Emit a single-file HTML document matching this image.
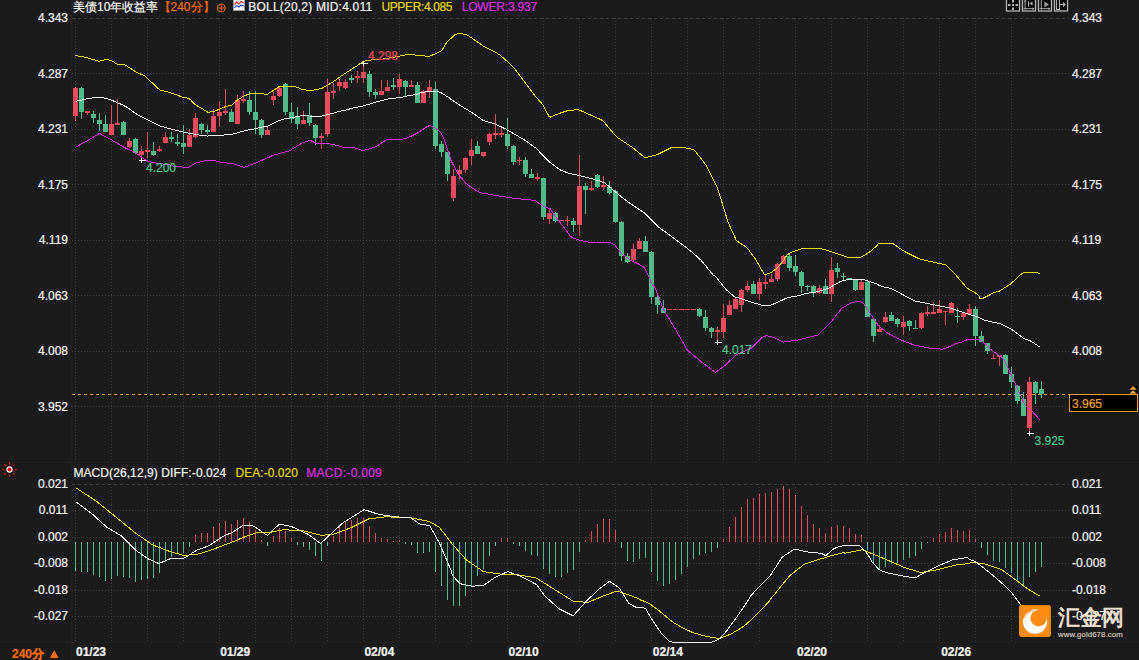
<!DOCTYPE html>
<html><head><meta charset="utf-8"><style>
html,body{margin:0;padding:0;background:#1b1b1b;width:1139px;height:660px;overflow:hidden;position:relative;font-family:"Liberation Sans",sans-serif}
.t{position:absolute;white-space:nowrap;line-height:1;font-family:"Liberation Sans",sans-serif;-webkit-text-stroke:0.2px currentColor}
</style></head><body>
<svg width="1139" height="660" viewBox="0 0 1139 660" style="position:absolute;left:0;top:0"><g stroke="#3c3c3c" stroke-width="1" stroke-dasharray="1,2" shape-rendering="crispEdges"><line x1="75.5" y1="18" x2="75.5" y2="461" /><line x1="75.5" y1="487" x2="75.5" y2="641" /><line x1="111.5" y1="18" x2="111.5" y2="461" /><line x1="111.5" y1="487" x2="111.5" y2="641" /><line x1="147.5" y1="18" x2="147.5" y2="461" /><line x1="147.5" y1="487" x2="147.5" y2="641" /><line x1="183.5" y1="18" x2="183.5" y2="461" /><line x1="183.5" y1="487" x2="183.5" y2="641" /><line x1="219.5" y1="18" x2="219.5" y2="461" /><line x1="219.5" y1="487" x2="219.5" y2="641" /><line x1="255.5" y1="18" x2="255.5" y2="461" /><line x1="255.5" y1="487" x2="255.5" y2="641" /><line x1="291.5" y1="18" x2="291.5" y2="461" /><line x1="291.5" y1="487" x2="291.5" y2="641" /><line x1="327.5" y1="18" x2="327.5" y2="461" /><line x1="327.5" y1="487" x2="327.5" y2="641" /><line x1="363.5" y1="18" x2="363.5" y2="461" /><line x1="363.5" y1="487" x2="363.5" y2="641" /><line x1="399.5" y1="18" x2="399.5" y2="461" /><line x1="399.5" y1="487" x2="399.5" y2="641" /><line x1="435.5" y1="18" x2="435.5" y2="461" /><line x1="435.5" y1="487" x2="435.5" y2="641" /><line x1="471.5" y1="18" x2="471.5" y2="461" /><line x1="471.5" y1="487" x2="471.5" y2="641" /><line x1="507.5" y1="18" x2="507.5" y2="461" /><line x1="507.5" y1="487" x2="507.5" y2="641" /><line x1="543.5" y1="18" x2="543.5" y2="461" /><line x1="543.5" y1="487" x2="543.5" y2="641" /><line x1="579.5" y1="18" x2="579.5" y2="461" /><line x1="579.5" y1="487" x2="579.5" y2="641" /><line x1="615.5" y1="18" x2="615.5" y2="461" /><line x1="615.5" y1="487" x2="615.5" y2="641" /><line x1="651.5" y1="18" x2="651.5" y2="461" /><line x1="651.5" y1="487" x2="651.5" y2="641" /><line x1="687.5" y1="18" x2="687.5" y2="461" /><line x1="687.5" y1="487" x2="687.5" y2="641" /><line x1="723.5" y1="18" x2="723.5" y2="461" /><line x1="723.5" y1="487" x2="723.5" y2="641" /><line x1="759.5" y1="18" x2="759.5" y2="461" /><line x1="759.5" y1="487" x2="759.5" y2="641" /><line x1="795.5" y1="18" x2="795.5" y2="461" /><line x1="795.5" y1="487" x2="795.5" y2="641" /><line x1="831.5" y1="18" x2="831.5" y2="461" /><line x1="831.5" y1="487" x2="831.5" y2="641" /><line x1="867.5" y1="18" x2="867.5" y2="461" /><line x1="867.5" y1="487" x2="867.5" y2="641" /><line x1="903.5" y1="18" x2="903.5" y2="461" /><line x1="903.5" y1="487" x2="903.5" y2="641" /><line x1="939.5" y1="18" x2="939.5" y2="461" /><line x1="939.5" y1="487" x2="939.5" y2="641" /><line x1="975.5" y1="18" x2="975.5" y2="461" /><line x1="975.5" y1="487" x2="975.5" y2="641" /><line x1="1011.5" y1="18" x2="1011.5" y2="461" /><line x1="1011.5" y1="487" x2="1011.5" y2="641" /><line x1="72" y1="73.5" x2="1069" y2="73.5" /><line x1="72" y1="129.5" x2="1069" y2="129.5" /><line x1="72" y1="184.5" x2="1069" y2="184.5" /><line x1="72" y1="240.5" x2="1069" y2="240.5" /><line x1="72" y1="295.5" x2="1069" y2="295.5" /><line x1="72" y1="351.5" x2="1069" y2="351.5" /><line x1="72" y1="406.5" x2="1069" y2="406.5" /><line x1="72" y1="510.5" x2="1069" y2="510.5" /><line x1="72" y1="537.5" x2="1069" y2="537.5" /><line x1="72" y1="563.5" x2="1069" y2="563.5" /><line x1="72" y1="590.5" x2="1069" y2="590.5" /><line x1="72" y1="616.5" x2="1069" y2="616.5" /></g><g stroke="#3c3c3c" stroke-width="1" stroke-dasharray="3,3" shape-rendering="crispEdges"><line x1="72" y1="18.5" x2="1069" y2="18.5"/><line x1="72" y1="484.5" x2="1069" y2="484.5"/></g><g stroke="#202020" stroke-width="1" shape-rendering="crispEdges"><line x1="0" y1="462.5" x2="1139" y2="462.5"/><line x1="71.5" y1="0" x2="71.5" y2="660"/><line x1="0" y1="642.5" x2="1139" y2="642.5"/></g><line x1="72" y1="394.5" x2="1069" y2="394.5" stroke="#f0a030" stroke-width="1" stroke-dasharray="3,3" shape-rendering="crispEdges"/><g shape-rendering="crispEdges"><rect x="75" y="87.0" width="1" height="34.0" fill="#ea4c5e"/><rect x="73" y="87.7" width="5" height="28.1" fill="#ea4c5e"/><rect x="81" y="87.0" width="1" height="32.0" fill="#52b98a"/><rect x="79" y="88.0" width="5" height="23.8" fill="#52b98a"/><rect x="87" y="111.0" width="1" height="3.8" fill="#ea4c5e"/><rect x="85" y="111.0" width="5" height="1.5" fill="#ea4c5e"/><rect x="93" y="111.0" width="1" height="11.8" fill="#52b98a"/><rect x="91" y="114.1" width="5" height="3.9" fill="#52b98a"/><rect x="99" y="112.9" width="1" height="18.0" fill="#52b98a"/><rect x="97" y="120.2" width="5" height="3.6" fill="#52b98a"/><rect x="105" y="114.8" width="1" height="17.4" fill="#52b98a"/><rect x="103" y="124.0" width="5" height="7.8" fill="#52b98a"/><rect x="111" y="105.1" width="1" height="29.7" fill="#ea4c5e"/><rect x="109" y="124.0" width="5" height="10.8" fill="#ea4c5e"/><rect x="117" y="99.0" width="1" height="25.8" fill="#ea4c5e"/><rect x="115" y="123.2" width="5" height="1.6" fill="#ea4c5e"/><rect x="123" y="121.0" width="1" height="13.8" fill="#52b98a"/><rect x="121" y="121.5" width="5" height="13.3" fill="#52b98a"/><rect x="129" y="138.0" width="1" height="9.7" fill="#ea4c5e"/><rect x="127" y="140.8" width="5" height="6.2" fill="#ea4c5e"/><rect x="135" y="138.0" width="1" height="15.5" fill="#52b98a"/><rect x="133" y="138.6" width="5" height="14.2" fill="#52b98a"/><rect x="141" y="146.0" width="1" height="14.0" fill="#ea4c5e"/><rect x="139" y="150.9" width="5" height="3.8" fill="#ea4c5e"/><rect x="147" y="132.2" width="1" height="25.8" fill="#ea4c5e"/><rect x="145" y="150.0" width="5" height="1.5" fill="#ea4c5e"/><rect x="153" y="141.9" width="1" height="13.9" fill="#52b98a"/><rect x="151" y="150.9" width="5" height="4.3" fill="#52b98a"/><rect x="159" y="146.0" width="1" height="5.8" fill="#ea4c5e"/><rect x="157" y="149.1" width="5" height="1.8" fill="#ea4c5e"/><rect x="165" y="132.0" width="1" height="11.0" fill="#ea4c5e"/><rect x="163" y="137.0" width="5" height="6.0" fill="#ea4c5e"/><rect x="171" y="132.0" width="1" height="10.0" fill="#52b98a"/><rect x="169" y="137.3" width="5" height="1.5" fill="#52b98a"/><rect x="177" y="134.0" width="1" height="12.0" fill="#52b98a"/><rect x="175" y="142.1" width="5" height="1.8" fill="#52b98a"/><rect x="183" y="125.2" width="1" height="28.8" fill="#52b98a"/><rect x="181" y="143.0" width="5" height="4.0" fill="#52b98a"/><rect x="189" y="129.0" width="1" height="18.0" fill="#ea4c5e"/><rect x="187" y="134.8" width="5" height="12.2" fill="#ea4c5e"/><rect x="195" y="113.0" width="1" height="24.5" fill="#ea4c5e"/><rect x="193" y="118.2" width="5" height="18.7" fill="#ea4c5e"/><rect x="201" y="123.0" width="1" height="10.6" fill="#52b98a"/><rect x="199" y="124.0" width="5" height="5.8" fill="#52b98a"/><rect x="207" y="125.0" width="1" height="9.0" fill="#52b98a"/><rect x="205" y="130.2" width="5" height="1.5" fill="#52b98a"/><rect x="213" y="109.1" width="1" height="22.6" fill="#ea4c5e"/><rect x="211" y="116.0" width="5" height="15.7" fill="#ea4c5e"/><rect x="219" y="100.8" width="1" height="25.7" fill="#ea4c5e"/><rect x="217" y="112.1" width="5" height="3.9" fill="#ea4c5e"/><rect x="225" y="88.9" width="1" height="26.1" fill="#ea4c5e"/><rect x="223" y="111.1" width="5" height="1.9" fill="#ea4c5e"/><rect x="231" y="109.1" width="1" height="12.9" fill="#52b98a"/><rect x="229" y="112.4" width="5" height="9.2" fill="#52b98a"/><rect x="237" y="95.0" width="1" height="28.7" fill="#ea4c5e"/><rect x="235" y="100.1" width="5" height="23.6" fill="#ea4c5e"/><rect x="243" y="91.1" width="1" height="11.6" fill="#ea4c5e"/><rect x="241" y="98.8" width="5" height="2.0" fill="#ea4c5e"/><rect x="249" y="91.1" width="1" height="23.9" fill="#52b98a"/><rect x="247" y="100.1" width="5" height="11.6" fill="#52b98a"/><rect x="255" y="91.1" width="1" height="42.5" fill="#52b98a"/><rect x="253" y="112.1" width="5" height="7.4" fill="#52b98a"/><rect x="261" y="119.0" width="1" height="19.0" fill="#52b98a"/><rect x="259" y="119.5" width="5" height="15.3" fill="#52b98a"/><rect x="267" y="125.7" width="1" height="9.0" fill="#ea4c5e"/><rect x="265" y="130.2" width="5" height="4.5" fill="#ea4c5e"/><rect x="273" y="91.6" width="1" height="13.5" fill="#ea4c5e"/><rect x="271" y="96.1" width="5" height="3.9" fill="#ea4c5e"/><rect x="279" y="87.0" width="1" height="9.7" fill="#ea4c5e"/><rect x="277" y="87.7" width="5" height="8.4" fill="#ea4c5e"/><rect x="285" y="83.0" width="1" height="31.8" fill="#52b98a"/><rect x="283" y="83.8" width="5" height="28.4" fill="#52b98a"/><rect x="291" y="103.2" width="1" height="19.9" fill="#52b98a"/><rect x="289" y="112.2" width="5" height="6.4" fill="#52b98a"/><rect x="297" y="107.0" width="1" height="22.0" fill="#52b98a"/><rect x="295" y="116.7" width="5" height="7.1" fill="#52b98a"/><rect x="303" y="111.3" width="1" height="12.5" fill="#ea4c5e"/><rect x="301" y="119.9" width="5" height="3.9" fill="#ea4c5e"/><rect x="309" y="103.2" width="1" height="22.5" fill="#52b98a"/><rect x="307" y="115.4" width="5" height="7.1" fill="#52b98a"/><rect x="315" y="124.0" width="1" height="21.0" fill="#52b98a"/><rect x="313" y="124.7" width="5" height="13.2" fill="#52b98a"/><rect x="321" y="133.0" width="1" height="15.8" fill="#ea4c5e"/><rect x="319" y="136.2" width="5" height="1.7" fill="#ea4c5e"/><rect x="327" y="79.1" width="1" height="57.6" fill="#ea4c5e"/><rect x="325" y="92.2" width="5" height="41.9" fill="#ea4c5e"/><rect x="333" y="83.0" width="1" height="15.7" fill="#ea4c5e"/><rect x="331" y="90.9" width="5" height="2.0" fill="#ea4c5e"/><rect x="339" y="79.3" width="1" height="11.6" fill="#ea4c5e"/><rect x="337" y="82.2" width="5" height="3.6" fill="#ea4c5e"/><rect x="345" y="79.1" width="1" height="9.5" fill="#ea4c5e"/><rect x="343" y="82.2" width="5" height="5.5" fill="#ea4c5e"/><rect x="351" y="75.1" width="1" height="7.7" fill="#52b98a"/><rect x="349" y="78.3" width="5" height="1.3" fill="#52b98a"/><rect x="357" y="71.0" width="1" height="11.8" fill="#ea4c5e"/><rect x="355" y="75.7" width="5" height="2.2" fill="#ea4c5e"/><rect x="363" y="62.7" width="1" height="20.1" fill="#ea4c5e"/><rect x="361" y="71.9" width="5" height="6.0" fill="#ea4c5e"/><rect x="369" y="71.2" width="1" height="25.8" fill="#52b98a"/><rect x="367" y="74.1" width="5" height="17.8" fill="#52b98a"/><rect x="375" y="89.0" width="1" height="10.0" fill="#52b98a"/><rect x="373" y="92.2" width="5" height="2.5" fill="#52b98a"/><rect x="381" y="80.0" width="1" height="15.1" fill="#ea4c5e"/><rect x="379" y="91.2" width="5" height="3.9" fill="#ea4c5e"/><rect x="387" y="80.0" width="1" height="10.8" fill="#ea4c5e"/><rect x="385" y="87.0" width="5" height="3.8" fill="#ea4c5e"/><rect x="393" y="77.9" width="1" height="12.0" fill="#52b98a"/><rect x="391" y="85.2" width="5" height="1.5" fill="#52b98a"/><rect x="399" y="74.1" width="1" height="19.7" fill="#ea4c5e"/><rect x="397" y="79.0" width="5" height="7.7" fill="#ea4c5e"/><rect x="405" y="80.0" width="1" height="16.0" fill="#52b98a"/><rect x="403" y="80.9" width="5" height="5.8" fill="#52b98a"/><rect x="411" y="80.0" width="1" height="6.7" fill="#ea4c5e"/><rect x="409" y="85.0" width="5" height="1.7" fill="#ea4c5e"/><rect x="417" y="82.0" width="1" height="21.0" fill="#52b98a"/><rect x="415" y="85.0" width="5" height="18.0" fill="#52b98a"/><rect x="423" y="90.0" width="1" height="13.0" fill="#ea4c5e"/><rect x="421" y="91.0" width="5" height="12.0" fill="#ea4c5e"/><rect x="429" y="80.0" width="1" height="18.0" fill="#ea4c5e"/><rect x="427" y="87.0" width="5" height="3.9" fill="#ea4c5e"/><rect x="435" y="81.8" width="1" height="67.2" fill="#52b98a"/><rect x="433" y="89.0" width="5" height="56.8" fill="#52b98a"/><rect x="441" y="141.2" width="1" height="15.6" fill="#52b98a"/><rect x="439" y="144.0" width="5" height="7.8" fill="#52b98a"/><rect x="447" y="151.8" width="1" height="28.9" fill="#52b98a"/><rect x="445" y="152.0" width="5" height="22.1" fill="#52b98a"/><rect x="453" y="169.0" width="1" height="32.0" fill="#ea4c5e"/><rect x="451" y="176.1" width="5" height="22.1" fill="#ea4c5e"/><rect x="459" y="165.0" width="1" height="13.5" fill="#ea4c5e"/><rect x="457" y="170.2" width="5" height="3.6" fill="#ea4c5e"/><rect x="465" y="157.4" width="1" height="15.4" fill="#ea4c5e"/><rect x="463" y="158.0" width="5" height="11.8" fill="#ea4c5e"/><rect x="471" y="138.5" width="1" height="26.5" fill="#ea4c5e"/><rect x="469" y="150.0" width="5" height="5.7" fill="#ea4c5e"/><rect x="477" y="140.9" width="1" height="12.7" fill="#52b98a"/><rect x="475" y="145.8" width="5" height="7.8" fill="#52b98a"/><rect x="483" y="151.8" width="1" height="5.5" fill="#ea4c5e"/><rect x="481" y="151.8" width="5" height="4.2" fill="#ea4c5e"/><rect x="489" y="132.7" width="1" height="12.4" fill="#ea4c5e"/><rect x="487" y="133.6" width="5" height="8.6" fill="#ea4c5e"/><rect x="495" y="114.2" width="1" height="24.9" fill="#ea4c5e"/><rect x="493" y="133.1" width="5" height="1.4" fill="#ea4c5e"/><rect x="501" y="126.9" width="1" height="9.8" fill="#ea4c5e"/><rect x="499" y="133.1" width="5" height="1.8" fill="#ea4c5e"/><rect x="507" y="118.0" width="1" height="30.6" fill="#52b98a"/><rect x="505" y="134.2" width="5" height="11.6" fill="#52b98a"/><rect x="513" y="145.0" width="1" height="20.0" fill="#52b98a"/><rect x="511" y="145.8" width="5" height="15.9" fill="#52b98a"/><rect x="519" y="157.2" width="1" height="7.8" fill="#ea4c5e"/><rect x="517" y="160.1" width="5" height="1.3" fill="#ea4c5e"/><rect x="525" y="157.2" width="1" height="19.6" fill="#52b98a"/><rect x="523" y="159.5" width="5" height="14.6" fill="#52b98a"/><rect x="531" y="169.2" width="1" height="8.5" fill="#52b98a"/><rect x="529" y="174.1" width="5" height="3.6" fill="#52b98a"/><rect x="537" y="173.2" width="1" height="7.6" fill="#ea4c5e"/><rect x="535" y="177.2" width="5" height="1.4" fill="#ea4c5e"/><rect x="543" y="177.7" width="1" height="42.4" fill="#52b98a"/><rect x="541" y="177.7" width="5" height="39.5" fill="#52b98a"/><rect x="549" y="207.7" width="1" height="16.0" fill="#ea4c5e"/><rect x="547" y="213.2" width="5" height="5.4" fill="#ea4c5e"/><rect x="555" y="212.3" width="1" height="10.0" fill="#52b98a"/><rect x="553" y="213.2" width="5" height="7.3" fill="#52b98a"/><rect x="561" y="220.1" width="1" height="1.3" fill="#ea4c5e"/><rect x="559" y="220.1" width="5" height="1.3" fill="#ea4c5e"/><rect x="567" y="215.9" width="1" height="9.6" fill="#ea4c5e"/><rect x="565" y="220.1" width="5" height="1.3" fill="#ea4c5e"/><rect x="573" y="217.8" width="1" height="14.0" fill="#52b98a"/><rect x="571" y="221.0" width="5" height="3.9" fill="#52b98a"/><rect x="579" y="155.0" width="1" height="81.0" fill="#ea4c5e"/><rect x="577" y="186.0" width="5" height="38.8" fill="#ea4c5e"/><rect x="585" y="182.8" width="1" height="31.2" fill="#52b98a"/><rect x="583" y="186.0" width="5" height="4.0" fill="#52b98a"/><rect x="591" y="181.0" width="1" height="10.0" fill="#ea4c5e"/><rect x="589" y="188.1" width="5" height="1.9" fill="#ea4c5e"/><rect x="597" y="173.5" width="1" height="14.2" fill="#52b98a"/><rect x="595" y="174.6" width="5" height="12.2" fill="#52b98a"/><rect x="603" y="176.3" width="1" height="13.2" fill="#ea4c5e"/><rect x="601" y="185.0" width="5" height="1.8" fill="#ea4c5e"/><rect x="609" y="180.5" width="1" height="13.2" fill="#52b98a"/><rect x="607" y="186.5" width="5" height="6.7" fill="#52b98a"/><rect x="615" y="189.5" width="1" height="33.3" fill="#52b98a"/><rect x="613" y="190.5" width="5" height="31.8" fill="#52b98a"/><rect x="621" y="221.0" width="1" height="40.0" fill="#52b98a"/><rect x="619" y="221.7" width="5" height="34.2" fill="#52b98a"/><rect x="627" y="253.2" width="1" height="10.0" fill="#52b98a"/><rect x="625" y="255.9" width="5" height="6.4" fill="#52b98a"/><rect x="633" y="244.1" width="1" height="16.4" fill="#ea4c5e"/><rect x="631" y="249.0" width="5" height="10.9" fill="#ea4c5e"/><rect x="639" y="237.7" width="1" height="10.9" fill="#ea4c5e"/><rect x="637" y="241.0" width="5" height="7.6" fill="#ea4c5e"/><rect x="645" y="236.0" width="1" height="15.9" fill="#52b98a"/><rect x="643" y="241.4" width="5" height="10.5" fill="#52b98a"/><rect x="651" y="250.9" width="1" height="52.7" fill="#52b98a"/><rect x="649" y="251.8" width="5" height="45.1" fill="#52b98a"/><rect x="657" y="292.7" width="1" height="21.3" fill="#52b98a"/><rect x="655" y="297.3" width="5" height="7.2" fill="#52b98a"/><rect x="663" y="300.0" width="1" height="12.7" fill="#52b98a"/><rect x="661" y="308.2" width="5" height="4.5" fill="#52b98a"/><rect x="669" y="308.5" width="1" height="1.1" fill="#ea4c5e"/><rect x="667" y="308.5" width="5" height="1.1" fill="#ea4c5e"/><rect x="675" y="308.5" width="1" height="1.1" fill="#ea4c5e"/><rect x="673" y="308.5" width="5" height="1.1" fill="#ea4c5e"/><rect x="681" y="308.5" width="1" height="1.1" fill="#ea4c5e"/><rect x="679" y="308.5" width="5" height="1.1" fill="#ea4c5e"/><rect x="687" y="308.5" width="1" height="1.1" fill="#ea4c5e"/><rect x="685" y="308.5" width="5" height="1.1" fill="#ea4c5e"/><rect x="693" y="308.5" width="1" height="1.1" fill="#ea4c5e"/><rect x="691" y="308.5" width="5" height="1.1" fill="#ea4c5e"/><rect x="699" y="308.2" width="1" height="8.6" fill="#52b98a"/><rect x="697" y="308.5" width="5" height="7.9" fill="#52b98a"/><rect x="705" y="310.0" width="1" height="20.9" fill="#52b98a"/><rect x="703" y="317.3" width="5" height="10.9" fill="#52b98a"/><rect x="711" y="327.3" width="1" height="10.5" fill="#52b98a"/><rect x="709" y="327.8" width="5" height="4.0" fill="#52b98a"/><rect x="717" y="326.7" width="1" height="15.1" fill="#ea4c5e"/><rect x="715" y="330.0" width="5" height="1.5" fill="#ea4c5e"/><rect x="723" y="304.0" width="1" height="33.5" fill="#ea4c5e"/><rect x="721" y="318.2" width="5" height="13.6" fill="#ea4c5e"/><rect x="729" y="300.3" width="1" height="14.3" fill="#ea4c5e"/><rect x="727" y="305.0" width="5" height="9.6" fill="#ea4c5e"/><rect x="735" y="297.0" width="1" height="11.7" fill="#ea4c5e"/><rect x="733" y="299.0" width="5" height="9.7" fill="#ea4c5e"/><rect x="741" y="288.8" width="1" height="22.9" fill="#ea4c5e"/><rect x="739" y="289.9" width="5" height="14.8" fill="#ea4c5e"/><rect x="747" y="281.4" width="1" height="10.6" fill="#ea4c5e"/><rect x="745" y="286.2" width="5" height="3.7" fill="#ea4c5e"/><rect x="753" y="281.4" width="1" height="12.1" fill="#52b98a"/><rect x="751" y="283.5" width="5" height="10.0" fill="#52b98a"/><rect x="759" y="278.2" width="1" height="21.6" fill="#ea4c5e"/><rect x="757" y="282.0" width="5" height="11.5" fill="#ea4c5e"/><rect x="765" y="274.4" width="1" height="14.4" fill="#ea4c5e"/><rect x="763" y="282.0" width="5" height="1.5" fill="#ea4c5e"/><rect x="771" y="274.0" width="1" height="8.0" fill="#ea4c5e"/><rect x="769" y="279.2" width="5" height="2.8" fill="#ea4c5e"/><rect x="777" y="263.3" width="1" height="17.4" fill="#ea4c5e"/><rect x="775" y="264.4" width="5" height="14.8" fill="#ea4c5e"/><rect x="783" y="255.3" width="1" height="8.5" fill="#ea4c5e"/><rect x="781" y="255.9" width="5" height="7.9" fill="#ea4c5e"/><rect x="789" y="253.3" width="1" height="17.5" fill="#52b98a"/><rect x="787" y="255.5" width="5" height="12.5" fill="#52b98a"/><rect x="795" y="255.0" width="1" height="20.5" fill="#52b98a"/><rect x="793" y="265.8" width="5" height="5.8" fill="#52b98a"/><rect x="801" y="270.8" width="1" height="21.7" fill="#52b98a"/><rect x="799" y="271.7" width="5" height="14.1" fill="#52b98a"/><rect x="807" y="284.7" width="1" height="6.1" fill="#52b98a"/><rect x="805" y="286.3" width="5" height="1.0" fill="#52b98a"/><rect x="813" y="284.7" width="1" height="12.3" fill="#52b98a"/><rect x="811" y="285.8" width="5" height="6.7" fill="#52b98a"/><rect x="819" y="285.0" width="1" height="9.2" fill="#ea4c5e"/><rect x="817" y="288.3" width="5" height="4.2" fill="#ea4c5e"/><rect x="825" y="279.2" width="1" height="14.5" fill="#52b98a"/><rect x="823" y="286.3" width="5" height="7.4" fill="#52b98a"/><rect x="831" y="257.0" width="1" height="44.7" fill="#ea4c5e"/><rect x="829" y="270.0" width="5" height="23.7" fill="#ea4c5e"/><rect x="837" y="263.0" width="1" height="14.5" fill="#52b98a"/><rect x="835" y="268.3" width="5" height="3.7" fill="#52b98a"/><rect x="843" y="273.3" width="1" height="7.5" fill="#52b98a"/><rect x="841" y="275.8" width="5" height="1.0" fill="#52b98a"/><rect x="849" y="278.3" width="1" height="1.7" fill="#52b98a"/><rect x="847" y="278.3" width="5" height="1.7" fill="#52b98a"/><rect x="855" y="278.7" width="1" height="12.1" fill="#52b98a"/><rect x="853" y="279.7" width="5" height="10.3" fill="#52b98a"/><rect x="861" y="278.7" width="1" height="11.3" fill="#ea4c5e"/><rect x="859" y="282.0" width="5" height="8.0" fill="#ea4c5e"/><rect x="867" y="280.0" width="1" height="36.7" fill="#52b98a"/><rect x="865" y="282.0" width="5" height="34.7" fill="#52b98a"/><rect x="873" y="318.3" width="1" height="23.4" fill="#52b98a"/><rect x="871" y="319.2" width="5" height="16.6" fill="#52b98a"/><rect x="879" y="325.0" width="1" height="6.8" fill="#ea4c5e"/><rect x="877" y="328.7" width="5" height="3.1" fill="#ea4c5e"/><rect x="885" y="312.4" width="1" height="10.3" fill="#ea4c5e"/><rect x="883" y="317.3" width="5" height="4.9" fill="#ea4c5e"/><rect x="891" y="312.4" width="1" height="8.5" fill="#52b98a"/><rect x="889" y="314.5" width="5" height="6.4" fill="#52b98a"/><rect x="897" y="318.2" width="1" height="8.7" fill="#52b98a"/><rect x="895" y="318.5" width="5" height="5.5" fill="#52b98a"/><rect x="903" y="316.4" width="1" height="18.1" fill="#ea4c5e"/><rect x="901" y="321.5" width="5" height="5.8" fill="#ea4c5e"/><rect x="909" y="320.0" width="1" height="10.5" fill="#52b98a"/><rect x="907" y="320.9" width="5" height="4.9" fill="#52b98a"/><rect x="915" y="320.0" width="1" height="8.7" fill="#52b98a"/><rect x="913" y="327.6" width="5" height="1.1" fill="#52b98a"/><rect x="921" y="312.4" width="1" height="16.7" fill="#ea4c5e"/><rect x="919" y="312.7" width="5" height="15.5" fill="#ea4c5e"/><rect x="927" y="306.4" width="1" height="9.1" fill="#ea4c5e"/><rect x="925" y="312.4" width="5" height="1.2" fill="#ea4c5e"/><rect x="933" y="302.2" width="1" height="11.4" fill="#ea4c5e"/><rect x="931" y="312.4" width="5" height="1.2" fill="#ea4c5e"/><rect x="939" y="300.0" width="1" height="12.7" fill="#ea4c5e"/><rect x="937" y="309.1" width="5" height="3.6" fill="#ea4c5e"/><rect x="945" y="310.5" width="1" height="14.0" fill="#ea4c5e"/><rect x="943" y="311.3" width="5" height="1.1" fill="#ea4c5e"/><rect x="951" y="301.8" width="1" height="10.9" fill="#ea4c5e"/><rect x="949" y="302.7" width="5" height="10.0" fill="#ea4c5e"/><rect x="957" y="308.2" width="1" height="14.5" fill="#52b98a"/><rect x="955" y="316.4" width="5" height="1.0" fill="#52b98a"/><rect x="963" y="312.7" width="1" height="7.3" fill="#ea4c5e"/><rect x="961" y="312.7" width="5" height="4.0" fill="#ea4c5e"/><rect x="969" y="304.0" width="1" height="9.6" fill="#ea4c5e"/><rect x="967" y="308.7" width="5" height="4.9" fill="#ea4c5e"/><rect x="975" y="306.2" width="1" height="39.8" fill="#52b98a"/><rect x="973" y="309.1" width="5" height="26.6" fill="#52b98a"/><rect x="981" y="331.2" width="1" height="10.9" fill="#52b98a"/><rect x="979" y="335.9" width="5" height="6.2" fill="#52b98a"/><rect x="987" y="343.4" width="1" height="10.5" fill="#52b98a"/><rect x="985" y="343.4" width="5" height="7.5" fill="#52b98a"/><rect x="993" y="353.9" width="1" height="4.8" fill="#ea4c5e"/><rect x="991" y="357.5" width="5" height="1.2" fill="#ea4c5e"/><rect x="999" y="355.0" width="1" height="10.8" fill="#ea4c5e"/><rect x="997" y="355.0" width="5" height="1.5" fill="#ea4c5e"/><rect x="1005" y="354.3" width="1" height="19.7" fill="#52b98a"/><rect x="1003" y="355.0" width="5" height="19.0" fill="#52b98a"/><rect x="1011" y="367.0" width="1" height="20.5" fill="#52b98a"/><rect x="1009" y="374.2" width="5" height="7.4" fill="#52b98a"/><rect x="1017" y="384.8" width="1" height="18.7" fill="#52b98a"/><rect x="1015" y="386.2" width="5" height="14.3" fill="#52b98a"/><rect x="1023" y="392.3" width="1" height="23.5" fill="#52b98a"/><rect x="1021" y="399.1" width="5" height="16.7" fill="#52b98a"/><rect x="1029" y="377.3" width="1" height="55.7" fill="#ea4c5e"/><rect x="1027" y="382.0" width="5" height="46.0" fill="#ea4c5e"/><rect x="1035" y="381.1" width="1" height="22.8" fill="#52b98a"/><rect x="1033" y="382.0" width="5" height="10.6" fill="#52b98a"/><rect x="1041" y="381.1" width="1" height="16.6" fill="#52b98a"/><rect x="1039" y="389.3" width="5" height="4.6" fill="#52b98a"/></g><polyline points="75.0,55.5 76.0,55.7 77.0,55.8 78.0,56.0 79.0,56.2 80.0,56.3 81.0,56.5 82.0,56.6 83.0,56.8 84.0,57.0 85.0,57.2 86.0,57.5 87.0,57.7 88.0,58.0 89.0,58.3 90.0,58.6 91.0,58.9 92.0,59.2 93.0,59.5 94.0,59.8 95.0,60.1 96.0,60.4 97.0,60.7 98.0,60.9 99.0,61.2 100.0,61.1 101.0,60.8 102.0,60.5 103.0,60.3 104.0,60.0 105.0,59.7 106.0,59.5 107.0,59.7 108.0,59.9 109.0,60.0 110.0,60.2 111.0,60.4 112.0,60.9 113.0,61.6 114.0,62.2 115.0,62.8 116.0,63.4 117.0,64.0 118.0,64.4 119.0,64.4 120.0,64.4 121.0,64.4 122.0,64.4 123.0,64.4 124.0,64.4 125.0,64.9 126.0,65.5 127.0,66.2 128.0,66.8 129.0,67.4 130.0,68.1 131.0,68.7 132.0,69.4 133.0,70.0 134.0,70.7 135.0,71.3 136.0,72.0 137.0,72.6 138.0,73.1 139.0,73.5 140.0,73.8 141.0,74.2 142.0,74.6 143.0,74.9 144.0,75.3 145.0,76.2 146.0,77.2 147.0,78.1 148.0,79.0 149.0,80.0 150.0,80.9 151.0,81.8 152.0,82.7 153.0,83.7 154.0,84.6 155.0,85.5 156.0,86.5 157.0,87.4 158.0,88.3 159.0,89.3 160.0,90.1 161.0,90.3 162.0,90.6 163.0,90.8 164.0,91.1 165.0,91.2 166.0,91.5 167.0,91.8 168.0,92.0 169.0,92.3 170.0,92.6 171.0,92.9 172.0,93.2 173.0,93.6 174.0,94.0 175.0,94.3 176.0,94.7 177.0,95.1 178.0,95.4 179.0,95.8 180.0,96.2 181.0,96.6 182.0,96.9 183.0,97.3 184.0,97.5 185.0,97.7 186.0,97.9 187.0,98.0 188.0,98.2 189.0,98.4 190.0,99.3 191.0,100.3 192.0,101.4 193.0,102.4 194.0,103.4 195.0,104.5 196.0,105.2 197.0,105.8 198.0,106.3 199.0,106.8 200.0,107.4 201.0,107.9 202.0,108.5 203.0,109.2 204.0,109.8 205.0,110.5 206.0,111.1 207.0,111.8 208.0,112.2 209.0,112.3 210.0,112.1 211.0,111.9 212.0,111.8 213.0,111.6 214.0,111.4 215.0,111.1 216.0,110.6 217.0,110.2 218.0,109.8 219.0,109.3 220.0,108.9 221.0,108.5 222.0,108.0 223.0,107.6 224.0,107.2 225.0,106.8 226.0,106.5 227.0,106.3 228.0,106.0 229.0,105.8 230.0,105.6 231.0,105.4 232.0,104.9 233.0,104.0 234.0,103.1 235.0,102.2 236.0,101.3 237.0,100.5 238.0,99.7 239.0,99.1 240.0,98.5 241.0,97.9 242.0,97.2 243.0,96.6 244.0,96.1 245.0,95.6 246.0,95.2 247.0,94.8 248.0,94.3 249.0,93.9 250.0,93.7 251.0,93.7 252.0,93.7 253.0,93.7 254.0,93.7 255.0,93.7 256.0,93.7 257.0,93.7 258.0,93.5 259.0,93.5 260.0,93.6 261.0,93.7 262.0,93.8 263.0,93.9 264.0,94.0 265.0,94.1 266.0,94.7 267.0,94.4 268.0,93.8 269.0,93.2 270.0,92.5 271.0,91.9 272.0,91.3 273.0,90.6 274.0,90.0 275.0,89.3 276.0,88.6 277.0,88.0 278.0,87.3 279.0,86.7 280.0,86.4 281.0,86.4 282.0,86.4 283.0,86.4 284.0,86.4 285.0,86.4 286.0,86.4 287.0,86.4 288.0,86.4 289.0,86.4 290.0,86.4 291.0,86.4 292.0,86.4 293.0,86.4 294.0,86.4 295.0,86.7 296.0,87.1 297.0,87.4 298.0,87.8 299.0,88.1 300.0,88.5 301.0,88.9 302.0,89.2 303.0,89.6 304.0,89.8 305.0,89.9 306.0,90.1 307.0,90.3 308.0,90.4 309.0,90.6 310.0,90.6 311.0,90.5 312.0,90.3 313.0,90.2 314.0,90.1 315.0,89.9 316.0,89.8 317.0,89.6 318.0,89.4 319.0,89.1 320.0,88.8 321.0,88.5 322.0,88.2 323.0,87.8 324.0,87.2 325.0,86.6 326.0,86.0 327.0,85.5 328.0,84.9 329.0,84.3 330.0,83.7 331.0,83.2 332.0,82.6 333.0,82.0 334.0,81.2 335.0,80.5 336.0,79.8 337.0,79.1 338.0,78.3 339.0,77.6 340.0,76.9 341.0,76.2 342.0,75.5 343.0,74.8 344.0,74.1 345.0,73.5 346.0,72.8 347.0,72.1 348.0,71.4 349.0,70.8 350.0,70.4 351.0,69.7 352.0,69.1 353.0,68.4 354.0,67.7 355.0,67.1 356.0,66.4 357.0,65.8 358.0,65.1 359.0,64.3 360.0,63.6 361.0,62.9 362.0,62.3 363.0,61.6 364.0,61.2 365.0,61.0 366.0,60.9 367.0,60.7 368.0,60.5 369.0,60.4 370.0,60.2 371.0,60.0 372.0,59.9 373.0,59.8 374.0,59.7 375.0,59.7 376.0,59.6 377.0,59.5 378.0,59.4 379.0,59.3 380.0,59.3 381.0,59.2 382.0,59.1 383.0,59.0 384.0,58.9 385.0,58.8 386.0,58.6 387.0,58.4 388.0,58.3 389.0,58.1 390.0,57.9 391.0,57.8 392.0,57.6 393.0,57.4 394.0,57.3 395.0,57.1 396.0,56.9 397.0,56.7 398.0,56.5 399.0,56.3 400.0,56.1 401.0,55.9 402.0,55.7 403.0,55.5 404.0,55.3 405.0,55.1 406.0,54.9 407.0,54.7 408.0,54.5 409.0,54.6 410.0,54.6 411.0,54.7 412.0,54.8 413.0,54.8 414.0,54.9 415.0,55.0 416.0,55.0 417.0,55.1 418.0,55.2 419.0,55.3 420.0,55.4 421.0,55.5 422.0,55.6 423.0,55.7 424.0,55.9 425.0,56.0 426.0,56.1 427.0,56.2 428.0,56.3 429.0,56.4 430.0,56.0 431.0,55.6 432.0,55.2 433.0,54.8 434.0,54.4 435.0,53.9 436.0,53.4 437.0,53.0 438.0,52.5 439.0,52.1 440.0,51.6 441.0,51.2 442.0,50.3 443.0,48.6 444.0,46.9 445.0,45.2 446.0,43.5 447.0,42.0 448.0,41.0 449.0,40.0 450.0,39.1 451.0,38.3 452.0,37.4 453.0,36.5 454.0,35.5 455.0,34.7 456.0,34.4 457.0,34.1 458.0,33.8 459.0,33.4 460.0,33.4 461.0,33.6 462.0,33.8 463.0,34.0 464.0,34.2 465.0,34.4 466.0,34.6 467.0,34.8 468.0,35.5 469.0,36.2 470.0,36.9 471.0,37.5 472.0,38.2 473.0,38.9 474.0,39.6 475.0,40.3 476.0,41.0 477.0,41.7 478.0,42.4 479.0,43.0 480.0,43.7 481.0,44.4 482.0,45.1 483.0,45.8 484.0,46.4 485.0,46.9 486.0,47.4 487.0,47.9 488.0,48.4 489.0,48.9 490.0,49.4 491.0,49.9 492.0,50.4 493.0,50.9 494.0,51.4 495.0,52.0 496.0,52.6 497.0,53.2 498.0,53.9 499.0,54.5 500.0,55.1 501.0,55.9 502.0,56.8 503.0,57.7 504.0,58.6 505.0,59.5 506.0,60.4 507.0,61.2 508.0,62.1 509.0,63.0 510.0,63.9 511.0,64.8 512.0,65.9 513.0,67.0 514.0,68.1 515.0,69.2 516.0,70.4 517.0,71.7 518.0,73.1 519.0,74.5 520.0,75.8 521.0,77.2 522.0,78.5 523.0,79.9 524.0,81.2 525.0,82.6 526.0,84.0 527.0,85.3 528.0,86.6 529.0,88.0 530.0,89.3 531.0,90.6 532.0,91.9 533.0,93.3 534.0,94.6 535.0,95.9 536.0,97.1 537.0,98.2 538.0,99.3 539.0,100.4 540.0,101.5 541.0,102.6 542.0,103.7 543.0,105.1 544.0,107.0 545.0,108.9 546.0,110.8 547.0,112.7 548.0,114.6 549.0,116.5 550.0,117.2 551.0,116.7 552.0,116.3 553.0,115.9 554.0,115.4 555.0,115.0 556.0,114.6 557.0,114.2 558.0,113.9 559.0,113.5 560.0,113.2 561.0,112.8 562.0,112.5 563.0,112.2 564.0,111.8 565.0,111.5 566.0,111.2 567.0,110.8 568.0,110.5 569.0,110.1 570.0,110.1 571.0,110.3 572.0,110.2 573.0,110.1 574.0,110.0 575.0,109.9 576.0,109.7 577.0,109.6 578.0,109.5 579.0,109.9 580.0,110.3 581.0,110.8 582.0,111.2 583.0,111.7 584.0,112.1 585.0,112.6 586.0,113.0 587.0,113.5 588.0,113.9 589.0,114.3 590.0,114.8 591.0,115.2 592.0,115.7 593.0,116.1 594.0,116.6 595.0,117.0 596.0,117.5 597.0,117.9 598.0,118.4 599.0,118.8 600.0,119.3 601.0,119.7 602.0,120.2 603.0,120.9 604.0,122.0 605.0,123.2 606.0,124.4 607.0,125.6 608.0,126.8 609.0,128.0 610.0,129.2 611.0,130.4 612.0,131.6 613.0,132.8 614.0,133.9 615.0,135.1 616.0,136.3 617.0,137.2 618.0,137.9 619.0,138.5 620.0,139.2 621.0,139.9 622.0,140.5 623.0,141.2 624.0,141.9 625.0,142.5 626.0,143.2 627.0,143.8 628.0,144.5 629.0,145.2 630.0,145.8 631.0,146.5 632.0,147.2 633.0,147.9 634.0,148.7 635.0,149.5 636.0,150.3 637.0,151.2 638.0,152.0 639.0,152.8 640.0,153.7 641.0,154.5 642.0,155.3 643.0,156.1 644.0,157.0 645.0,157.8 646.0,157.5 647.0,157.3 648.0,157.0 649.0,156.8 650.0,156.5 651.0,156.2 652.0,156.0 653.0,155.7 654.0,155.5 655.0,155.2 656.0,154.9 657.0,154.7 658.0,154.2 659.0,153.7 660.0,153.2 661.0,152.7 662.0,152.2 663.0,151.7 664.0,151.2 665.0,150.7 666.0,150.2 667.0,149.7 668.0,149.2 669.0,148.7 670.0,148.2 671.0,147.7 672.0,147.7 673.0,147.6 674.0,147.6 675.0,147.5 676.0,147.5 677.0,147.4 678.0,147.4 679.0,147.3 680.0,147.3 681.0,147.2 682.0,147.2 683.0,147.4 684.0,147.6 685.0,147.8 686.0,148.0 687.0,148.2 688.0,148.4 689.0,148.7 690.0,148.9 691.0,149.1 692.0,149.3 693.0,149.5 694.0,149.7 695.0,150.9 696.0,152.1 697.0,153.4 698.0,154.7 699.0,156.0 700.0,157.3 701.0,158.6 702.0,159.8 703.0,161.1 704.0,162.4 705.0,163.7 706.0,165.0 707.0,166.7 708.0,168.7 709.0,170.7 710.0,172.7 711.0,174.7 712.0,176.7 713.0,178.7 714.0,180.7 715.0,182.7 716.0,184.7 717.0,186.7 718.0,189.6 719.0,192.8 720.0,196.0 721.0,199.2 722.0,202.5 723.0,205.7 724.0,208.9 725.0,212.2 726.0,215.4 727.0,218.6 728.0,221.8 729.0,224.3 730.0,226.5 731.0,228.7 732.0,230.9 733.0,233.1 734.0,235.3 735.0,237.4 736.0,239.9 737.0,240.9 738.0,241.6 739.0,242.3 740.0,243.0 741.0,243.7 742.0,244.4 743.0,245.1 744.0,245.7 745.0,246.4 746.0,247.1 747.0,247.8 748.0,248.9 749.0,250.3 750.0,251.7 751.0,253.1 752.0,254.5 753.0,255.9 754.0,257.2 755.0,258.6 756.0,260.1 757.0,261.8 758.0,263.5 759.0,265.2 760.0,266.9 761.0,268.7 762.0,270.4 763.0,272.1 764.0,273.8 765.0,274.7 766.0,274.4 767.0,274.1 768.0,273.7 769.0,273.3 770.0,273.0 771.0,272.5 772.0,271.8 773.0,271.1 774.0,270.3 775.0,269.6 776.0,268.9 777.0,268.2 778.0,267.3 779.0,266.2 780.0,264.9 781.0,263.6 782.0,262.3 783.0,261.0 784.0,259.7 785.0,257.5 786.0,256.4 787.0,255.3 788.0,254.3 789.0,253.6 790.0,253.1 791.0,252.6 792.0,252.1 793.0,251.8 794.0,251.4 795.0,251.1 796.0,250.8 797.0,250.4 798.0,250.1 799.0,249.8 800.0,249.4 801.0,249.1 802.0,248.9 803.0,248.7 804.0,248.5 805.0,248.3 806.0,248.3 807.0,248.3 808.0,248.3 809.0,248.3 810.0,248.3 811.0,248.3 812.0,248.3 813.0,248.3 814.0,248.3 815.0,248.3 816.0,248.3 817.0,248.3 818.0,248.3 819.0,248.3 820.0,248.3 821.0,248.6 822.0,248.9 823.0,249.2 824.0,249.5 825.0,249.8 826.0,250.1 827.0,250.4 828.0,250.7 829.0,251.0 830.0,251.4 831.0,251.7 832.0,252.0 833.0,252.4 834.0,252.7 835.0,253.0 836.0,253.4 837.0,253.7 838.0,254.0 839.0,254.4 840.0,254.7 841.0,255.0 842.0,255.4 843.0,255.7 844.0,256.0 845.0,256.4 846.0,256.7 847.0,257.1 848.0,257.4 849.0,257.5 850.0,257.4 851.0,257.4 852.0,257.4 853.0,257.3 854.0,257.3 855.0,257.2 856.0,257.2 857.0,257.2 858.0,257.1 859.0,257.1 860.0,257.1 861.0,257.0 862.0,256.8 863.0,256.2 864.0,255.5 865.0,254.9 866.0,254.3 867.0,253.6 868.0,253.0 869.0,252.3 870.0,251.7 871.0,250.8 872.0,250.0 873.0,249.1 874.0,248.2 875.0,247.3 876.0,246.5 877.0,245.6 878.0,244.0 879.0,243.6 880.0,243.2 881.0,243.2 882.0,243.2 883.0,243.2 884.0,243.2 885.0,243.2 886.0,243.3 887.0,243.3 888.0,243.3 889.0,243.3 890.0,243.3 891.0,243.3 892.0,243.3 893.0,243.6 894.0,244.3 895.0,245.0 896.0,245.7 897.0,246.4 898.0,247.1 899.0,247.8 900.0,248.5 901.0,249.2 902.0,249.9 903.0,250.6 904.0,251.2 905.0,251.7 906.0,252.2 907.0,252.7 908.0,253.2 909.0,253.7 910.0,254.2 911.0,254.7 912.0,255.2 913.0,255.7 914.0,256.2 915.0,256.7 916.0,257.2 917.0,257.7 918.0,258.2 919.0,258.7 920.0,259.1 921.0,259.4 922.0,259.6 923.0,259.8 924.0,260.0 925.0,260.3 926.0,260.5 927.0,260.7 928.0,260.9 929.0,261.2 930.0,261.4 931.0,261.6 932.0,261.8 933.0,262.1 934.0,262.3 935.0,262.5 936.0,262.7 937.0,263.0 938.0,263.2 939.0,263.4 940.0,263.6 941.0,263.8 942.0,264.0 943.0,264.1 944.0,264.3 945.0,264.5 946.0,265.2 947.0,266.2 948.0,267.2 949.0,268.2 950.0,269.2 951.0,270.3 952.0,271.3 953.0,272.3 954.0,273.3 955.0,274.3 956.0,275.3 957.0,276.4 958.0,277.6 959.0,278.8 960.0,279.9 961.0,281.1 962.0,282.3 963.0,283.4 964.0,284.6 965.0,285.8 966.0,286.9 967.0,288.1 968.0,288.7 969.0,289.3 970.0,289.9 971.0,290.5 972.0,291.0 973.0,291.6 974.0,292.2 975.0,292.8 976.0,293.3 977.0,293.9 978.0,294.9 979.0,296.3 980.0,298.4 981.0,298.6 982.0,298.7 983.0,298.2 984.0,297.7 985.0,297.2 986.0,296.7 987.0,296.2 988.0,295.7 989.0,295.2 990.0,294.7 991.0,293.9 992.0,293.4 993.0,293.0 994.0,292.7 995.0,292.4 996.0,292.1 997.0,291.8 998.0,291.5 999.0,291.2 1000.0,290.8 1001.0,290.2 1002.0,289.5 1003.0,288.9 1004.0,288.2 1005.0,287.6 1006.0,287.0 1007.0,286.3 1008.0,285.7 1009.0,285.0 1010.0,284.4 1011.0,283.6 1012.0,282.6 1013.0,281.7 1014.0,280.8 1015.0,279.9 1016.0,278.9 1017.0,278.0 1018.0,277.1 1019.0,276.2 1020.0,275.2 1021.0,274.3 1022.0,273.6 1023.0,272.8 1024.0,272.1 1025.0,272.1 1026.0,272.1 1027.0,272.1 1028.0,272.1 1029.0,272.1 1030.0,272.1 1031.0,272.1 1032.0,272.1 1033.0,272.1 1034.0,272.1 1035.0,272.1 1036.0,272.1 1037.0,272.6 1038.0,273.1 1039.0,273.6 1040.0,274.1" fill="none" stroke="#e3da0a" stroke-width="1" stroke-linejoin="round" shape-rendering="crispEdges"/><polyline points="76.0,101.3 77.0,101.1 78.0,100.9 79.0,100.7 80.0,100.5 81.0,100.2 82.0,100.0 83.0,99.8 84.0,99.6 85.0,99.4 86.0,99.1 87.0,98.9 88.0,98.7 89.0,98.5 90.0,98.3 91.0,98.1 92.0,98.0 93.0,97.9 94.0,97.7 95.0,97.6 96.0,97.5 97.0,97.4 98.0,97.3 99.0,97.3 100.0,97.3 101.0,97.5 102.0,97.6 103.0,97.7 104.0,98.0 105.0,98.2 106.0,98.5 107.0,98.8 108.0,99.0 109.0,99.3 110.0,99.6 111.0,99.9 112.0,100.3 113.0,100.7 114.0,101.2 115.0,101.6 116.0,102.0 117.0,102.5 118.0,102.9 119.0,103.4 120.0,103.8 121.0,104.3 122.0,104.7 123.0,105.1 124.0,105.7 125.0,106.2 126.0,106.8 127.0,107.3 128.0,107.9 129.0,108.6 130.0,109.3 131.0,110.1 132.0,110.8 133.0,111.6 134.0,112.3 135.0,113.1 136.0,113.8 137.0,114.3 138.0,114.9 139.0,115.4 140.0,115.9 141.0,116.4 142.0,116.9 143.0,117.4 144.0,118.0 145.0,118.5 146.0,119.0 147.0,119.5 148.0,120.0 149.0,120.6 150.0,121.1 151.0,121.6 152.0,122.1 153.0,122.6 154.0,123.1 155.0,123.6 156.0,124.0 157.0,124.5 158.0,125.0 159.0,125.5 160.0,126.0 161.0,126.3 162.0,126.6 163.0,126.8 164.0,127.1 165.0,127.4 166.0,127.7 167.0,127.9 168.0,128.2 169.0,128.5 170.0,128.8 171.0,129.1 172.0,129.3 173.0,129.6 174.0,129.8 175.0,130.1 176.0,130.3 177.0,130.5 178.0,130.8 179.0,131.0 180.0,131.3 181.0,131.5 182.0,131.8 183.0,132.0 184.0,132.2 185.0,132.4 186.0,132.6 187.0,132.8 188.0,133.0 189.0,133.2 190.0,133.3 191.0,133.5 192.0,133.7 193.0,133.9 194.0,134.1 195.0,134.3 196.0,134.5 197.0,134.7 198.0,134.8 199.0,135.0 200.0,135.2 201.0,135.2 202.0,135.4 203.0,135.5 204.0,135.7 205.0,135.8 206.0,135.9 207.0,136.0 208.0,136.0 209.0,135.9 210.0,135.9 211.0,135.9 212.0,135.8 213.0,135.8 214.0,135.8 215.0,135.7 216.0,135.6 217.0,135.6 218.0,135.5 219.0,135.4 220.0,135.3 221.0,135.2 222.0,135.1 223.0,135.1 224.0,135.0 225.0,134.9 226.0,134.8 227.0,134.7 228.0,134.6 229.0,134.5 230.0,134.4 231.0,134.3 232.0,134.2 233.0,134.0 234.0,133.7 235.0,133.4 236.0,133.2 237.0,132.9 238.0,132.6 239.0,132.3 240.0,132.1 241.0,131.8 242.0,131.5 243.0,131.3 244.0,131.0 245.0,130.8 246.0,130.6 247.0,130.4 248.0,130.1 249.0,129.9 250.0,129.7 251.0,129.5 252.0,129.4 253.0,129.2 254.0,129.0 255.0,128.8 256.0,128.6 257.0,128.3 258.0,127.9 259.0,127.7 260.0,127.5 261.0,127.3 262.0,127.2 263.0,127.0 264.0,126.8 265.0,126.6 266.0,126.6 267.0,126.4 268.0,126.1 269.0,125.6 270.0,125.1 271.0,124.6 272.0,124.1 273.0,123.6 274.0,123.1 275.0,122.6 276.0,122.1 277.0,121.6 278.0,121.1 279.0,120.6 280.0,120.3 281.0,119.9 282.0,119.4 283.0,119.2 284.0,119.1 285.0,118.9 286.0,118.7 287.0,118.5 288.0,118.3 289.0,118.2 290.0,118.0 291.0,117.8 292.0,117.6 293.0,117.4 294.0,117.2 295.0,117.0 296.0,116.8 297.0,116.6 298.0,116.5 299.0,116.3 300.0,116.1 301.0,115.9 302.0,115.7 303.0,115.5 304.0,115.5 305.0,115.6 306.0,115.7 307.0,115.8 308.0,115.9 309.0,116.0 310.0,116.1 311.0,116.2 312.0,116.3 313.0,116.4 314.0,116.5 315.0,116.6 316.0,116.6 317.0,116.5 318.0,116.4 319.0,116.3 320.0,116.2 321.0,116.1 322.0,116.0 323.0,115.8 324.0,115.6 325.0,115.3 326.0,115.0 327.0,114.8 328.0,114.5 329.0,114.2 330.0,114.0 331.0,113.7 332.0,113.4 333.0,113.2 334.0,112.9 335.0,112.7 336.0,112.4 337.0,112.1 338.0,111.9 339.0,111.6 340.0,111.4 341.0,111.1 342.0,110.9 343.0,110.6 344.0,110.4 345.0,110.2 346.0,110.0 347.0,109.8 348.0,109.6 349.0,109.3 350.0,108.6 351.0,108.4 352.0,108.2 353.0,108.0 354.0,107.8 355.0,107.6 356.0,107.5 357.0,107.3 358.0,107.1 359.0,106.6 360.0,106.4 361.0,106.3 362.0,106.1 363.0,106.0 364.0,105.7 365.0,105.4 366.0,105.1 367.0,104.8 368.0,104.5 369.0,104.2 370.0,103.9 371.0,103.6 372.0,103.3 373.0,103.0 374.0,102.7 375.0,102.4 376.0,102.1 377.0,101.9 378.0,101.6 379.0,101.4 380.0,101.1 381.0,100.9 382.0,100.6 383.0,100.4 384.0,100.1 385.0,99.8 386.0,99.6 387.0,99.3 388.0,99.1 389.0,98.9 390.0,98.7 391.0,98.6 392.0,98.5 393.0,98.4 394.0,98.2 395.0,98.1 396.0,98.0 397.0,97.9 398.0,97.7 399.0,97.6 400.0,98.0 401.0,97.7 402.0,97.4 403.0,97.1 404.0,96.7 405.0,96.4 406.0,96.2 407.0,96.1 408.0,95.9 409.0,95.7 410.0,95.5 411.0,95.4 412.0,95.2 413.0,95.0 414.0,94.8 415.0,94.6 416.0,94.4 417.0,94.3 418.0,94.1 419.0,93.8 420.0,93.1 421.0,92.8 422.0,92.5 423.0,92.3 424.0,92.2 425.0,91.9 426.0,91.8 427.0,91.7 428.0,91.7 429.0,91.7 430.0,91.6 431.0,91.6 432.0,91.6 433.0,91.6 434.0,91.6 435.0,91.6 436.0,91.6 437.0,91.5 438.0,91.6 439.0,91.9 440.0,92.3 441.0,92.8 442.0,93.2 443.0,93.8 444.0,94.5 445.0,95.1 446.0,95.8 447.0,96.5 448.0,97.1 449.0,97.7 450.0,98.4 451.0,99.4 452.0,100.1 453.0,100.7 454.0,101.4 455.0,102.1 456.0,102.7 457.0,103.4 458.0,104.1 459.0,104.7 460.0,105.3 461.0,105.9 462.0,106.6 463.0,107.2 464.0,107.8 465.0,108.4 466.0,109.0 467.0,109.6 468.0,110.2 469.0,110.8 470.0,111.4 471.0,112.0 472.0,112.6 473.0,113.3 474.0,114.0 475.0,114.7 476.0,115.4 477.0,116.1 478.0,116.8 479.0,117.5 480.0,118.2 481.0,118.9 482.0,119.6 483.0,120.3 484.0,120.7 485.0,121.0 486.0,121.3 487.0,121.6 488.0,121.9 489.0,122.2 490.0,122.4 491.0,122.7 492.0,123.0 493.0,123.3 494.0,123.6 495.0,124.0 496.0,124.5 497.0,125.0 498.0,125.4 499.0,125.9 500.0,126.4 501.0,126.8 502.0,127.3 503.0,127.8 504.0,128.2 505.0,128.6 506.0,129.2 507.0,129.8 508.0,130.4 509.0,131.0 510.0,131.6 511.0,132.2 512.0,132.7 513.0,133.3 514.0,133.9 515.0,134.5 516.0,135.1 517.0,135.6 518.0,136.2 519.0,136.8 520.0,137.4 521.0,138.0 522.0,138.6 523.0,139.2 524.0,139.8 525.0,140.3 526.0,140.9 527.0,141.5 528.0,142.3 529.0,143.0 530.0,143.8 531.0,144.5 532.0,145.3 533.0,146.0 534.0,146.8 535.0,147.5 536.0,148.2 537.0,149.0 538.0,149.8 539.0,150.8 540.0,152.4 541.0,153.4 542.0,154.4 543.0,155.4 544.0,156.4 545.0,157.4 546.0,158.4 547.0,159.4 548.0,160.4 549.0,161.4 550.0,162.3 551.0,163.1 552.0,163.8 553.0,164.6 554.0,165.3 555.0,166.1 556.0,166.8 557.0,167.6 558.0,168.4 559.0,169.1 560.0,169.8 561.0,170.3 562.0,170.8 563.0,171.1 564.0,171.5 565.0,171.8 566.0,172.2 567.0,172.5 568.0,172.9 569.0,173.2 570.0,173.4 571.0,173.7 572.0,173.9 573.0,174.2 574.0,174.4 575.0,174.6 576.0,174.9 577.0,175.1 578.0,175.4 579.0,175.6 580.0,175.8 581.0,176.1 582.0,176.3 583.0,176.5 584.0,176.8 585.0,177.0 586.0,177.3 587.0,177.5 588.0,177.8 589.0,178.0 590.0,178.3 591.0,178.5 592.0,178.7 593.0,179.0 594.0,179.2 595.0,179.8 596.0,180.0 597.0,180.3 598.0,180.5 599.0,180.8 600.0,181.0 601.0,181.6 602.0,181.9 603.0,182.2 604.0,182.7 605.0,183.1 606.0,184.0 607.0,184.8 608.0,185.6 609.0,186.5 610.0,187.3 611.0,188.1 612.0,189.0 613.0,189.8 614.0,190.6 615.0,191.4 616.0,192.3 617.0,193.1 618.0,194.0 619.0,194.9 620.0,195.7 621.0,196.5 622.0,197.3 623.0,198.0 624.0,198.8 625.0,199.6 626.0,200.4 627.0,201.2 628.0,202.0 629.0,202.6 630.0,203.3 631.0,204.0 632.0,204.6 633.0,205.3 634.0,206.0 635.0,206.6 636.0,207.3 637.0,208.0 638.0,208.6 639.0,209.3 640.0,210.0 641.0,210.6 642.0,211.3 643.0,212.0 644.0,212.7 645.0,213.6 646.0,214.6 647.0,215.6 648.0,216.6 649.0,217.6 650.0,218.6 651.0,219.6 652.0,220.7 653.0,221.7 654.0,222.7 655.0,223.7 656.0,224.7 657.0,225.6 658.0,226.5 659.0,227.4 660.0,228.2 661.0,229.0 662.0,229.7 663.0,230.4 664.0,230.9 665.0,231.6 666.0,232.4 667.0,233.1 668.0,233.9 669.0,234.6 670.0,235.4 671.0,236.1 672.0,236.9 673.0,237.7 674.0,238.4 675.0,239.2 676.0,239.9 677.0,240.6 678.0,241.4 679.0,242.1 680.0,242.8 681.0,243.6 682.0,244.3 683.0,245.0 684.0,245.8 685.0,246.6 686.0,247.4 687.0,248.2 688.0,249.0 689.0,249.8 690.0,250.4 691.0,251.3 692.0,252.1 693.0,253.0 694.0,253.9 695.0,254.8 696.0,255.7 697.0,256.6 698.0,257.5 699.0,258.4 700.0,259.3 701.0,260.3 702.0,261.4 703.0,262.5 704.0,263.8 705.0,265.0 706.0,266.2 707.0,267.5 708.0,268.7 709.0,269.9 710.0,271.2 711.0,272.4 712.0,273.6 713.0,274.8 714.0,276.1 715.0,275.7 716.0,276.9 717.0,278.2 718.0,279.4 719.0,280.7 720.0,282.0 721.0,283.2 722.0,284.5 723.0,285.8 724.0,287.0 725.0,288.3 726.0,289.4 727.0,290.3 728.0,291.2 729.0,292.1 730.0,292.9 731.0,293.8 732.0,294.7 733.0,295.6 734.0,296.5 735.0,297.0 736.0,297.2 737.0,297.5 738.0,297.7 739.0,297.9 740.0,298.2 741.0,298.5 742.0,298.9 743.0,299.2 744.0,299.6 745.0,299.9 746.0,300.3 747.0,300.6 748.0,301.0 749.0,301.4 750.0,301.7 751.0,302.0 752.0,302.3 753.0,302.6 754.0,302.9 755.0,303.2 756.0,303.5 757.0,303.8 758.0,304.1 759.0,304.4 760.0,304.7 761.0,305.0 762.0,305.3 763.0,305.3 764.0,305.3 765.0,305.3 766.0,305.3 767.0,305.3 768.0,305.3 769.0,305.3 770.0,305.3 771.0,305.1 772.0,304.7 773.0,304.2 774.0,303.8 775.0,303.3 776.0,302.9 777.0,302.4 778.0,302.0 779.0,301.5 780.0,301.1 781.0,300.7 782.0,300.2 783.0,299.8 784.0,299.4 785.0,298.6 786.0,298.3 787.0,298.0 788.0,297.7 789.0,297.4 790.0,297.2 791.0,297.0 792.0,296.9 793.0,296.8 794.0,296.6 795.0,296.5 796.0,296.3 797.0,296.0 798.0,295.8 799.0,295.6 800.0,295.4 801.0,295.0 802.0,294.7 803.0,294.4 804.0,294.1 805.0,293.8 806.0,293.5 807.0,293.3 808.0,293.1 809.0,293.0 810.0,292.8 811.0,292.7 812.0,292.6 813.0,292.4 814.0,292.3 815.0,292.2 816.0,292.0 817.0,291.9 818.0,291.7 819.0,291.4 820.0,291.1 821.0,290.7 822.0,290.4 823.0,290.0 824.0,289.7 825.0,289.3 826.0,288.9 827.0,288.6 828.0,288.2 829.0,287.9 830.0,287.5 831.0,286.9 832.0,286.3 833.0,285.8 834.0,285.2 835.0,284.6 836.0,284.0 837.0,283.4 838.0,282.9 839.0,282.3 840.0,281.7 841.0,281.4 842.0,281.1 843.0,280.8 844.0,280.5 845.0,280.2 846.0,279.9 847.0,279.6 848.0,279.3 849.0,279.2 850.0,279.2 851.0,279.2 852.0,279.2 853.0,279.2 854.0,279.2 855.0,279.2 856.0,279.2 857.0,279.2 858.0,279.2 859.0,279.3 860.0,279.4 861.0,279.5 862.0,279.6 863.0,279.8 864.0,279.9 865.0,280.0 866.0,280.3 867.0,280.7 868.0,281.0 869.0,281.3 870.0,281.6 871.0,282.0 872.0,282.3 873.0,282.6 874.0,283.0 875.0,283.3 876.0,283.7 877.0,284.1 878.0,284.8 879.0,285.2 880.0,285.5 881.0,285.9 882.0,286.2 883.0,286.6 884.0,286.9 885.0,287.3 886.0,287.3 887.0,287.6 888.0,287.9 889.0,288.1 890.0,288.4 891.0,288.7 892.0,289.0 893.0,289.4 894.0,289.9 895.0,290.4 896.0,291.0 897.0,291.5 898.0,292.1 899.0,292.6 900.0,293.1 901.0,293.7 902.0,294.2 903.0,294.8 904.0,295.3 905.0,295.8 906.0,296.4 907.0,296.9 908.0,297.5 909.0,298.0 910.0,298.5 911.0,299.1 912.0,299.6 913.0,300.1 914.0,300.7 915.0,301.0 916.0,301.2 917.0,301.4 918.0,301.6 919.0,301.8 920.0,302.0 921.0,302.2 922.0,302.4 923.0,302.6 924.0,302.8 925.0,303.0 926.0,303.2 927.0,303.4 928.0,303.6 929.0,303.8 930.0,304.0 931.0,304.2 932.0,304.4 933.0,304.6 934.0,304.8 935.0,305.0 936.0,305.2 937.0,305.4 938.0,305.6 939.0,305.8 940.0,306.0 941.0,306.2 942.0,306.4 943.0,306.6 944.0,306.8 945.0,307.0 946.0,307.2 947.0,307.4 948.0,307.7 949.0,307.9 950.0,308.1 951.0,308.3 952.0,308.7 953.0,309.0 954.0,309.4 955.0,309.7 956.0,310.1 957.0,310.4 958.0,310.8 959.0,311.1 960.0,311.4 961.0,311.8 962.0,312.1 963.0,312.5 964.0,312.8 965.0,313.1 966.0,313.4 967.0,313.8 968.0,314.1 969.0,314.4 970.0,314.7 971.0,314.9 972.0,315.2 973.0,315.5 974.0,315.8 975.0,316.1 976.0,316.3 977.0,316.7 978.0,317.1 979.0,317.4 980.0,318.1 981.0,318.5 982.0,319.0 983.0,319.4 984.0,319.9 985.0,320.2 986.0,320.6 987.0,320.8 988.0,321.0 989.0,321.3 990.0,321.5 991.0,321.8 992.0,322.0 993.0,322.2 994.0,322.5 995.0,322.7 996.0,322.9 997.0,323.1 998.0,323.3 999.0,323.5 1000.0,323.8 1001.0,324.1 1002.0,324.6 1003.0,325.1 1004.0,325.6 1005.0,326.1 1006.0,326.6 1007.0,327.1 1008.0,327.5 1009.0,328.0 1010.0,328.5 1011.0,329.1 1012.0,329.7 1013.0,330.5 1014.0,331.2 1015.0,332.0 1016.0,332.7 1017.0,333.5 1018.0,334.2 1019.0,335.0 1020.0,335.7 1021.0,336.5 1022.0,337.2 1023.0,338.0 1024.0,338.7 1025.0,339.1 1026.0,339.4 1027.0,339.7 1028.0,340.1 1029.0,340.4 1030.0,340.7 1031.0,341.2 1032.0,341.9 1033.0,342.5 1034.0,343.2 1035.0,343.9 1036.0,344.5 1037.0,345.2 1038.0,345.9 1039.0,346.5 1040.0,347.2" fill="none" stroke="#f0f0f0" stroke-width="1" stroke-linejoin="round" shape-rendering="crispEdges"/><polyline points="76.0,147.0 77.0,146.4 78.0,145.8 79.0,145.3 80.0,144.7 81.0,144.2 82.0,143.6 83.0,143.1 84.0,142.5 85.0,141.9 86.0,141.4 87.0,140.8 88.0,140.2 89.0,139.7 90.0,139.1 91.0,138.5 92.0,137.9 93.0,137.3 94.0,136.7 95.0,136.1 96.0,135.5 97.0,134.9 98.0,134.3 99.0,133.7 100.0,133.8 101.0,134.3 102.0,134.9 103.0,135.4 104.0,135.9 105.0,136.5 106.0,137.0 107.0,137.5 108.0,138.0 109.0,138.6 110.0,139.1 111.0,139.6 112.0,140.2 113.0,140.8 114.0,141.4 115.0,142.0 116.0,142.6 117.0,143.2 118.0,143.7 119.0,144.3 120.0,144.9 121.0,145.5 122.0,146.1 123.0,146.7 124.0,147.2 125.0,147.7 126.0,148.2 127.0,148.7 128.0,149.2 129.0,149.7 130.0,150.1 131.0,150.6 132.0,151.1 133.0,151.6 134.0,152.1 135.0,152.6 136.0,153.2 137.0,153.9 138.0,154.6 139.0,155.2 140.0,155.9 141.0,156.7 142.0,157.3 143.0,158.1 144.0,158.8 145.0,159.4 146.0,160.1 147.0,160.8 148.0,161.3 149.0,161.5 150.0,161.7 151.0,162.0 152.0,162.2 153.0,162.4 154.0,162.6 155.0,162.8 156.0,163.1 157.0,163.3 158.0,163.5 159.0,163.7 160.0,163.6 161.0,163.7 162.0,163.9 163.0,164.0 164.0,164.1 165.0,164.3 166.0,164.4 167.0,164.5 168.0,164.7 169.0,164.8 170.0,164.9 171.0,165.6 172.0,165.8 173.0,166.0 174.0,166.2 175.0,166.4 176.0,166.6 177.0,166.7 178.0,166.7 179.0,166.8 180.0,166.9 181.0,166.9 182.0,167.0 183.0,167.1 184.0,167.1 185.0,167.2 186.0,167.2 187.0,167.3 188.0,167.4 189.0,167.0 190.0,166.4 191.0,165.8 192.0,165.2 193.0,164.5 194.0,163.9 195.0,163.4 196.0,163.1 197.0,162.9 198.0,162.6 199.0,162.4 200.0,162.1 201.0,161.9 202.0,161.6 203.0,161.4 204.0,161.1 205.0,160.9 206.0,160.6 207.0,160.4 208.0,160.3 209.0,160.4 210.0,160.5 211.0,160.5 212.0,160.6 213.0,160.7 214.0,160.7 215.0,160.8 216.0,161.0 217.0,161.2 218.0,161.4 219.0,161.7 220.0,161.9 221.0,162.2 222.0,162.4 223.0,162.7 224.0,162.8 225.0,162.8 226.0,162.9 227.0,163.0 228.0,163.1 229.0,163.1 230.0,163.2 231.0,163.3 232.0,163.3 233.0,163.5 234.0,163.9 235.0,164.2 236.0,164.6 237.0,165.0 238.0,165.3 239.0,165.7 240.0,166.1 241.0,166.4 242.0,166.8 243.0,167.1 244.0,167.3 245.0,166.9 246.0,166.6 247.0,166.2 248.0,165.9 249.0,165.5 250.0,165.1 251.0,164.8 252.0,164.4 253.0,164.0 254.0,163.7 255.0,163.3 256.0,162.9 257.0,162.4 258.0,162.0 259.0,161.6 260.0,161.1 261.0,160.7 262.0,160.2 263.0,159.8 264.0,159.4 265.0,158.9 266.0,158.5 267.0,158.0 268.0,157.6 269.0,157.2 270.0,156.7 271.0,156.3 272.0,155.8 273.0,155.4 274.0,155.0 275.0,154.7 276.0,154.5 277.0,154.2 278.0,153.9 279.0,153.7 280.0,153.4 281.0,153.1 282.0,152.8 283.0,152.6 284.0,152.3 285.0,152.0 286.0,151.8 287.0,151.5 288.0,151.2 289.0,150.9 290.0,150.5 291.0,149.9 292.0,149.2 293.0,148.6 294.0,148.0 295.0,147.4 296.0,146.8 297.0,146.1 298.0,145.5 299.0,144.9 300.0,144.3 301.0,143.6 302.0,143.0 303.0,142.6 304.0,142.3 305.0,141.9 306.0,141.6 307.0,141.3 308.0,140.9 309.0,140.6 310.0,140.2 311.0,140.7 312.0,141.2 313.0,141.7 314.0,142.2 315.0,142.7 316.0,143.2 317.0,143.4 318.0,143.4 319.0,143.4 320.0,143.4 321.0,143.4 322.0,143.4 323.0,143.4 324.0,143.4 325.0,143.4 326.0,143.4 327.0,143.6 328.0,143.8 329.0,143.9 330.0,144.1 331.0,144.3 332.0,144.5 333.0,144.6 334.0,144.8 335.0,145.0 336.0,145.1 337.0,145.3 338.0,145.7 339.0,146.0 340.0,146.3 341.0,146.6 342.0,147.0 343.0,147.3 344.0,147.6 345.0,147.6 346.0,147.6 347.0,147.7 348.0,147.7 349.0,147.7 350.0,147.7 351.0,147.7 352.0,147.8 353.0,147.8 354.0,147.8 355.0,148.0 356.0,148.3 357.0,148.6 358.0,148.9 359.0,149.3 360.0,149.6 361.0,149.9 362.0,150.2 363.0,150.5 364.0,150.4 365.0,150.1 366.0,149.8 367.0,149.5 368.0,149.2 369.0,148.9 370.0,148.7 371.0,148.3 372.0,148.0 373.0,147.6 374.0,147.3 375.0,146.9 376.0,146.5 377.0,146.0 378.0,145.3 379.0,144.7 380.0,144.0 381.0,143.3 382.0,142.7 383.0,142.0 384.0,141.4 385.0,140.7 386.0,140.0 387.0,139.5 388.0,139.5 389.0,139.5 390.0,139.5 391.0,139.5 392.0,139.5 393.0,139.5 394.0,139.5 395.0,139.5 396.0,139.5 397.0,139.5 398.0,139.5 399.0,139.5 400.0,139.5 401.0,139.5 402.0,139.4 403.0,139.1 404.0,138.8 405.0,138.5 406.0,138.2 407.0,137.9 408.0,137.6 409.0,137.1 410.0,136.6 411.0,136.2 412.0,135.7 413.0,135.2 414.0,134.8 415.0,134.3 416.0,133.8 417.0,133.3 418.0,132.7 419.0,132.0 420.0,131.3 421.0,130.6 422.0,130.0 423.0,129.3 424.0,128.6 425.0,127.9 426.0,127.3 427.0,126.8 428.0,126.3 429.0,125.8 430.0,125.5 431.0,126.0 432.0,126.5 433.0,127.0 434.0,127.5 435.0,128.1 436.0,128.7 437.0,129.4 438.0,130.0 439.0,131.0 440.0,132.1 441.0,133.2 442.0,134.8 443.0,137.0 444.0,139.2 445.0,142.0 446.0,144.8 447.0,147.6 448.0,150.6 449.0,153.9 450.0,157.2 451.0,160.5 452.0,162.6 453.0,164.5 454.0,166.3 455.0,168.1 456.0,169.9 457.0,171.5 458.0,173.0 459.0,174.5 460.0,176.0 461.0,177.4 462.0,178.6 463.0,179.8 464.0,181.0 465.0,182.2 466.0,183.4 467.0,184.2 468.0,184.9 469.0,185.7 470.0,186.4 471.0,187.2 472.0,187.9 473.0,188.6 474.0,189.1 475.0,189.7 476.0,190.3 477.0,190.8 478.0,191.4 479.0,191.9 480.0,192.5 481.0,192.7 482.0,192.9 483.0,193.2 484.0,193.4 485.0,193.6 486.0,193.8 487.0,193.9 488.0,194.1 489.0,194.3 490.0,194.5 491.0,194.6 492.0,194.8 493.0,195.0 494.0,195.1 495.0,195.3 496.0,195.5 497.0,195.6 498.0,195.8 499.0,196.0 500.0,196.2 501.0,196.3 502.0,196.5 503.0,196.6 504.0,196.8 505.0,196.9 506.0,197.1 507.0,197.2 508.0,197.4 509.0,197.6 510.0,197.7 511.0,197.9 512.0,198.0 513.0,198.2 514.0,198.3 515.0,198.5 516.0,198.6 517.0,198.7 518.0,198.8 519.0,198.9 520.0,198.9 521.0,199.0 522.0,199.1 523.0,199.2 524.0,199.3 525.0,199.4 526.0,199.4 527.0,199.5 528.0,199.6 529.0,199.7 530.0,199.9 531.0,200.0 532.0,200.1 533.0,200.2 534.0,200.3 535.0,200.4 540.0,204.0 541.0,204.6 542.0,205.2 543.0,205.9 544.0,206.5 545.0,207.1 546.0,207.6 547.0,207.8 548.0,208.0 549.0,208.1 550.0,208.3 551.0,209.9 552.0,211.6 553.0,213.3 554.0,214.6 555.0,216.0 556.0,217.3 557.0,218.6 558.0,219.9 559.0,221.2 560.0,222.5 561.0,223.7 562.0,225.0 563.0,226.3 564.0,227.6 565.0,228.8 566.0,230.1 567.0,231.4 568.0,232.7 569.0,234.0 570.0,235.8 571.0,236.6 572.0,237.4 573.0,238.2 574.0,238.6 575.0,238.8 576.0,239.1 577.0,239.4 578.0,239.7 579.0,240.0 580.0,240.2 581.0,240.5 582.0,240.8 583.0,241.1 584.0,241.3 585.0,241.5 586.0,241.8 587.0,241.9 588.0,242.0 589.0,242.0 590.0,242.1 591.0,242.2 592.0,242.3 593.0,242.3 594.0,242.4 595.0,242.8 596.0,242.8 597.0,242.9 598.0,242.9 599.0,242.9 600.0,243.0 601.0,242.7 602.0,242.6 603.0,242.6 604.0,242.6 605.0,242.6 606.0,242.6 607.0,242.6 608.0,242.7 609.0,242.7 610.0,242.7 611.0,242.9 612.0,243.4 613.0,244.0 614.0,244.6 615.0,245.2 616.0,246.4 617.0,247.7 618.0,249.0 619.0,250.2 620.0,251.5 621.0,252.8 622.0,254.0 623.0,254.8 624.0,255.5 625.0,256.2 626.0,256.9 627.0,257.6 628.0,258.4 629.0,259.1 630.0,259.8 631.0,260.5 632.0,261.1 633.0,261.5 634.0,261.9 635.0,262.3 636.0,262.8 637.0,263.2 638.0,263.8 639.0,264.3 640.0,264.9 641.0,265.4 642.0,266.0 643.0,266.5 644.0,267.3 645.0,269.2 646.0,271.2 647.0,273.1 648.0,275.0 649.0,277.0 650.0,279.0 651.0,281.6 652.0,284.2 655.0,287.7 656.0,290.3 657.0,292.9 658.0,295.5 659.0,298.1 660.0,300.7 661.0,303.3 662.0,305.9 663.0,308.4 664.0,310.6 665.0,312.2 666.0,313.8 667.0,315.4 668.0,317.0 669.0,318.6 670.0,320.2 671.0,321.8 672.0,323.4 673.0,325.0 674.0,326.8 675.0,328.5 676.0,330.3 677.0,332.0 678.0,333.8 679.0,335.5 680.0,337.2 681.0,339.0 682.0,340.7 683.0,342.5 684.0,344.2 685.0,346.0 686.0,347.7 687.0,349.5 690.0,352.4 691.0,353.2 692.0,354.1 693.0,354.9 694.0,355.7 695.0,356.6 696.0,357.4 697.0,358.2 698.0,359.1 699.0,359.9 700.0,360.7 701.0,361.6 702.0,362.4 703.0,363.2 704.0,364.0 705.0,364.7 706.0,365.5 707.0,366.2 708.0,367.0 709.0,367.7 710.0,368.5 711.0,369.2 712.0,370.0 713.0,370.7 714.0,371.5 715.0,372.2 716.0,372.2 717.0,371.5 718.0,370.7 719.0,370.0 720.0,369.2 721.0,368.5 722.0,367.7 723.0,367.0 724.0,366.2 725.0,365.3 726.0,364.4 727.0,363.5 728.0,362.5 729.0,361.6 730.0,360.7 731.0,359.8 732.0,358.9 733.0,358.0 734.0,357.1 735.0,356.2 736.0,355.2 737.0,354.5 738.0,354.0 739.0,353.6 740.0,353.2 741.0,352.7 742.0,352.3 743.0,351.9 744.0,351.4 745.0,351.0 746.0,350.6 747.0,350.1 748.0,349.7 749.0,349.3 750.0,348.8 751.0,348.4 752.0,347.7 753.0,346.7 754.0,345.7 755.0,344.7 756.0,343.7 757.0,342.6 758.0,341.6 759.0,340.6 760.0,339.6 761.0,338.6 762.0,337.6 763.0,337.1 764.0,336.6 765.0,336.2 766.0,335.7 767.0,335.7 768.0,336.0 769.0,336.3 770.0,336.6 771.0,336.9 772.0,337.1 773.0,337.4 774.0,337.7 775.0,338.1 776.0,338.6 777.0,339.1 778.0,339.6 779.0,340.1 780.0,340.6 781.0,341.1 782.0,341.6 783.0,342.1 784.0,342.1 785.0,341.9 786.0,341.8 787.0,341.6 788.0,341.5 789.0,341.3 790.0,341.2 791.0,341.0 792.0,340.9 793.0,340.7 794.0,340.6 795.0,340.4 796.0,340.3 797.0,340.1 798.0,340.0 799.0,339.8 800.0,339.7 802.0,339.1 803.0,338.9 804.0,338.6 805.0,338.4 806.0,338.1 807.0,337.9 808.0,337.6 809.0,337.4 810.0,337.1 811.0,336.8 812.0,336.6 813.0,336.3 814.0,336.1 815.0,335.8 816.0,335.6 817.0,335.3 818.0,335.1 819.0,334.3 820.0,333.3 821.0,332.3 822.0,331.3 823.0,330.3 824.0,329.3 825.0,328.3 826.0,327.3 827.0,326.3 828.0,325.3 829.0,324.3 830.0,323.3 831.0,322.0 832.0,320.7 833.0,319.5 834.0,318.2 835.0,316.9 836.0,315.6 837.0,314.3 838.0,313.0 839.0,311.8 840.0,310.5 841.0,309.2 842.0,308.1 843.0,307.5 844.0,307.0 845.0,306.4 846.0,305.8 847.0,305.2 848.0,304.6 849.0,304.1 850.0,303.5 851.0,302.9 852.0,302.5 853.0,302.3 854.0,302.2 855.0,302.0 856.0,301.9 857.0,301.7 858.0,301.6 859.0,301.4 860.0,301.3 861.0,301.9 862.0,302.5 863.0,303.1 864.0,304.3 865.0,305.8 866.0,307.3 867.0,308.8 868.0,310.3 869.0,311.8 870.0,313.3 871.0,314.8 872.0,316.3 873.0,317.8 874.0,319.3 875.0,320.8 876.0,322.3 877.0,323.6 878.0,325.4 879.0,326.2 880.0,327.0 881.0,327.8 882.0,328.6 883.0,329.4 884.0,330.2 885.0,331.1 886.0,332.0 887.0,332.7 888.0,333.2 889.0,333.8 890.0,334.3 891.0,334.9 892.0,335.4 893.0,335.9 894.0,336.5 895.0,337.0 896.0,337.6 897.0,338.1 898.0,338.6 899.0,339.2 900.0,339.7 901.0,340.1 902.0,340.4 903.0,340.8 904.0,341.2 905.0,341.6 906.0,341.9 907.0,342.3 908.0,342.7 909.0,343.1 910.0,343.4 911.0,343.8 912.0,344.2 913.0,344.6 914.0,344.9 915.0,345.2 916.0,345.4 917.0,345.6 918.0,345.8 919.0,346.0 920.0,346.2 921.0,346.4 922.0,346.6 923.0,346.8 924.0,347.0 925.0,347.2 926.0,347.4 927.0,347.6 928.0,347.8 929.0,348.0 930.0,348.2 931.0,348.4 932.0,348.6 933.0,348.7 934.0,348.8 935.0,348.8 936.0,348.8 937.0,348.9 938.0,348.9 939.0,348.9 940.0,349.0 941.0,349.0 942.0,349.0 943.0,349.1 944.0,348.9 945.0,348.5 946.0,348.0 947.0,347.6 948.0,347.2 949.0,346.7 950.0,346.3 951.0,345.9 952.0,345.4 953.0,345.0 954.0,344.6 955.0,344.1 956.0,343.7 957.0,343.3 958.0,343.0 959.0,342.6 960.0,342.8 961.0,342.4 962.0,342.0 963.0,341.5 964.0,341.1 965.0,340.7 966.0,340.3 967.0,339.8 968.0,339.4 969.0,339.2 970.0,339.3 971.0,339.4 972.0,339.5 973.0,339.5 974.0,339.6 975.0,339.7 976.0,339.8 977.0,339.9 978.0,339.9 979.0,339.9 980.0,340.0 981.0,340.4 982.0,341.2 983.0,342.0 984.0,342.8 985.0,343.6 986.0,344.4 987.0,345.3 988.0,346.1 989.0,347.0 990.0,348.9 991.0,349.7 992.0,350.4 993.0,351.1 994.0,351.9 995.0,352.6 996.0,353.4 997.0,354.1 998.0,354.9 999.0,355.5 1000.0,356.2 1001.0,356.9 1002.0,357.6 1003.0,358.7 1004.0,360.3 1005.0,362.3 1006.0,364.3 1007.0,366.3 1008.0,368.3 1009.0,370.3 1010.0,372.4 1011.0,374.6 1012.0,376.7 1013.0,378.9 1014.0,381.0 1015.0,383.2 1016.0,385.5 1017.0,387.6 1018.0,389.7 1019.0,391.9 1020.0,394.0 1021.0,396.2 1022.0,398.3 1023.0,400.5 1024.0,402.7 1025.0,404.8 1026.0,406.3 1027.0,407.0 1028.0,407.8 1029.0,408.6 1030.0,409.3 1031.0,410.1 1032.0,411.2 1033.0,412.3 1034.0,413.4 1035.0,414.4 1036.0,415.5 1037.0,416.6 1038.0,417.7 1039.0,418.8 1040.0,419.8" fill="none" stroke="#de2ee6" stroke-width="1" stroke-linejoin="round" shape-rendering="crispEdges"/><g stroke="#e8e8e8" stroke-width="1" shape-rendering="crispEdges"><line x1="139.0" y1="160.5" x2="146.0" y2="160.5"/><line x1="141.5" y1="158.0" x2="141.5" y2="163.0"/></g><g stroke="#e8e8e8" stroke-width="1" shape-rendering="crispEdges"><line x1="361.0" y1="63.5" x2="368.0" y2="63.5"/><line x1="363.5" y1="61.0" x2="363.5" y2="66.0"/></g><g stroke="#e8e8e8" stroke-width="1" shape-rendering="crispEdges"><line x1="715.0" y1="342.5" x2="722.0" y2="342.5"/><line x1="717.5" y1="340.0" x2="717.5" y2="345.0"/></g><g stroke="#e8e8e8" stroke-width="1" shape-rendering="crispEdges"><line x1="1027.0" y1="433.5" x2="1034.0" y2="433.5"/><line x1="1029.5" y1="431.0" x2="1029.5" y2="436.0"/></g><g stroke-width="1" shape-rendering="crispEdges"><line x1="75.5" y1="542" x2="75.5" y2="570.9" stroke="#52b98a"/><line x1="81.5" y1="542" x2="81.5" y2="572.1" stroke="#52b98a"/><line x1="87.5" y1="542" x2="87.5" y2="572.1" stroke="#52b98a"/><line x1="93.5" y1="542" x2="93.5" y2="574.5" stroke="#52b98a"/><line x1="99.5" y1="542" x2="99.5" y2="576.5" stroke="#52b98a"/><line x1="105.5" y1="542" x2="105.5" y2="580.6" stroke="#52b98a"/><line x1="111.5" y1="542" x2="111.5" y2="578.9" stroke="#52b98a"/><line x1="117.5" y1="542" x2="117.5" y2="575.8" stroke="#52b98a"/><line x1="123.5" y1="542" x2="123.5" y2="577.0" stroke="#52b98a"/><line x1="129.5" y1="542" x2="129.5" y2="578.2" stroke="#52b98a"/><line x1="135.5" y1="542" x2="135.5" y2="581.8" stroke="#52b98a"/><line x1="141.5" y1="542" x2="141.5" y2="579.9" stroke="#52b98a"/><line x1="147.5" y1="542" x2="147.5" y2="578.9" stroke="#52b98a"/><line x1="153.5" y1="542" x2="153.5" y2="577.5" stroke="#52b98a"/><line x1="159.5" y1="542" x2="159.5" y2="572.6" stroke="#52b98a"/><line x1="165.5" y1="542" x2="165.5" y2="562.4" stroke="#52b98a"/><line x1="171.5" y1="542" x2="171.5" y2="557.1" stroke="#52b98a"/><line x1="177.5" y1="542" x2="177.5" y2="552.7" stroke="#52b98a"/><line x1="183.5" y1="542" x2="183.5" y2="552.7" stroke="#52b98a"/><line x1="189.5" y1="542" x2="189.5" y2="546.7" stroke="#52b98a"/><line x1="195.5" y1="535.3" x2="195.5" y2="542" stroke="#ea4c5e"/><line x1="201.5" y1="532.8" x2="201.5" y2="542" stroke="#ea4c5e"/><line x1="207.5" y1="532.8" x2="207.5" y2="542" stroke="#ea4c5e"/><line x1="213.5" y1="527.3" x2="213.5" y2="542" stroke="#ea4c5e"/><line x1="219.5" y1="523.2" x2="219.5" y2="542" stroke="#ea4c5e"/><line x1="225.5" y1="521.2" x2="225.5" y2="542" stroke="#ea4c5e"/><line x1="231.5" y1="524.1" x2="231.5" y2="542" stroke="#ea4c5e"/><line x1="237.5" y1="520.0" x2="237.5" y2="542" stroke="#ea4c5e"/><line x1="243.5" y1="518.3" x2="243.5" y2="542" stroke="#ea4c5e"/><line x1="249.5" y1="521.7" x2="249.5" y2="542" stroke="#ea4c5e"/><line x1="255.5" y1="529.7" x2="255.5" y2="542" stroke="#ea4c5e"/><line x1="261.5" y1="540.3" x2="261.5" y2="542" stroke="#ea4c5e"/><line x1="267.5" y1="542" x2="267.5" y2="545.5" stroke="#52b98a"/><line x1="273.5" y1="536.2" x2="273.5" y2="542" stroke="#ea4c5e"/><line x1="279.5" y1="528.0" x2="279.5" y2="542" stroke="#ea4c5e"/><line x1="285.5" y1="531.4" x2="285.5" y2="542" stroke="#ea4c5e"/><line x1="291.5" y1="537.7" x2="291.5" y2="542" stroke="#ea4c5e"/><line x1="297.5" y1="542" x2="297.5" y2="545.0" stroke="#52b98a"/><line x1="303.5" y1="542" x2="303.5" y2="547.4" stroke="#52b98a"/><line x1="309.5" y1="542" x2="309.5" y2="549.8" stroke="#52b98a"/><line x1="315.5" y1="542" x2="315.5" y2="556.4" stroke="#52b98a"/><line x1="321.5" y1="542" x2="321.5" y2="560.5" stroke="#52b98a"/><line x1="327.5" y1="542" x2="327.5" y2="545.5" stroke="#52b98a"/><line x1="333.5" y1="536.2" x2="333.5" y2="542" stroke="#ea4c5e"/><line x1="339.5" y1="527.3" x2="339.5" y2="542" stroke="#ea4c5e"/><line x1="345.5" y1="521.7" x2="345.5" y2="542" stroke="#ea4c5e"/><line x1="351.5" y1="520.0" x2="351.5" y2="542" stroke="#ea4c5e"/><line x1="357.5" y1="517.6" x2="357.5" y2="542" stroke="#ea4c5e"/><line x1="363.5" y1="517.6" x2="363.5" y2="542" stroke="#ea4c5e"/><line x1="369.5" y1="525.6" x2="369.5" y2="542" stroke="#ea4c5e"/><line x1="375.5" y1="532.8" x2="375.5" y2="542" stroke="#ea4c5e"/><line x1="381.5" y1="537.7" x2="381.5" y2="542" stroke="#ea4c5e"/><line x1="387.5" y1="538.7" x2="387.5" y2="542" stroke="#ea4c5e"/><line x1="393.5" y1="540.6" x2="393.5" y2="542" stroke="#ea4c5e"/><line x1="399.5" y1="540.1" x2="399.5" y2="542" stroke="#ea4c5e"/><line x1="405.5" y1="542" x2="405.5" y2="544.2" stroke="#52b98a"/><line x1="411.5" y1="542" x2="411.5" y2="545.0" stroke="#52b98a"/><line x1="417.5" y1="542" x2="417.5" y2="552.7" stroke="#52b98a"/><line x1="423.5" y1="542" x2="423.5" y2="552.7" stroke="#52b98a"/><line x1="429.5" y1="542" x2="429.5" y2="552.2" stroke="#52b98a"/><line x1="435.5" y1="542" x2="435.5" y2="571.6" stroke="#52b98a"/><line x1="441.5" y1="542" x2="441.5" y2="586.2" stroke="#52b98a"/><line x1="447.5" y1="542" x2="447.5" y2="600.0" stroke="#52b98a"/><line x1="453.5" y1="542" x2="453.5" y2="606.3" stroke="#52b98a"/><line x1="459.5" y1="542" x2="459.5" y2="605.8" stroke="#52b98a"/><line x1="465.5" y1="542" x2="465.5" y2="596.4" stroke="#52b98a"/><line x1="471.5" y1="542" x2="471.5" y2="585.5" stroke="#52b98a"/><line x1="477.5" y1="542" x2="477.5" y2="575.8" stroke="#52b98a"/><line x1="483.5" y1="542" x2="483.5" y2="568.5" stroke="#52b98a"/><line x1="489.5" y1="542" x2="489.5" y2="555.6" stroke="#52b98a"/><line x1="495.5" y1="542" x2="495.5" y2="545.5" stroke="#52b98a"/><line x1="501.5" y1="538.2" x2="501.5" y2="542" stroke="#ea4c5e"/><line x1="507.5" y1="537.7" x2="507.5" y2="542" stroke="#ea4c5e"/><line x1="513.5" y1="542" x2="513.5" y2="543.5" stroke="#52b98a"/><line x1="519.5" y1="542" x2="519.5" y2="545.5" stroke="#52b98a"/><line x1="525.5" y1="542" x2="525.5" y2="550.8" stroke="#52b98a"/><line x1="531.5" y1="542" x2="531.5" y2="554.7" stroke="#52b98a"/><line x1="537.5" y1="542" x2="537.5" y2="555.6" stroke="#52b98a"/><line x1="543.5" y1="542" x2="543.5" y2="568.5" stroke="#52b98a"/><line x1="549.5" y1="542" x2="549.5" y2="574.1" stroke="#52b98a"/><line x1="555.5" y1="542" x2="555.5" y2="576.5" stroke="#52b98a"/><line x1="561.5" y1="542" x2="561.5" y2="576.5" stroke="#52b98a"/><line x1="567.5" y1="542" x2="567.5" y2="573.3" stroke="#52b98a"/><line x1="573.5" y1="542" x2="573.5" y2="569.7" stroke="#52b98a"/><line x1="579.5" y1="542" x2="579.5" y2="551.5" stroke="#52b98a"/><line x1="585.5" y1="540.1" x2="585.5" y2="542" stroke="#ea4c5e"/><line x1="591.5" y1="530.9" x2="591.5" y2="542" stroke="#ea4c5e"/><line x1="597.5" y1="524.1" x2="597.5" y2="542" stroke="#ea4c5e"/><line x1="603.5" y1="518.8" x2="603.5" y2="542" stroke="#ea4c5e"/><line x1="609.5" y1="518.8" x2="609.5" y2="542" stroke="#ea4c5e"/><line x1="615.5" y1="529.7" x2="615.5" y2="542" stroke="#ea4c5e"/><line x1="621.5" y1="542" x2="621.5" y2="548.4" stroke="#52b98a"/><line x1="627.5" y1="542" x2="627.5" y2="561.2" stroke="#52b98a"/><line x1="633.5" y1="542" x2="633.5" y2="562.4" stroke="#52b98a"/><line x1="639.5" y1="542" x2="639.5" y2="558.8" stroke="#52b98a"/><line x1="645.5" y1="542" x2="645.5" y2="557.6" stroke="#52b98a"/><line x1="651.5" y1="542" x2="651.5" y2="571.8" stroke="#52b98a"/><line x1="657.5" y1="542" x2="657.5" y2="580.6" stroke="#52b98a"/><line x1="663.5" y1="542" x2="663.5" y2="586.2" stroke="#52b98a"/><line x1="669.5" y1="542" x2="669.5" y2="584.2" stroke="#52b98a"/><line x1="675.5" y1="542" x2="675.5" y2="579.9" stroke="#52b98a"/><line x1="681.5" y1="542" x2="681.5" y2="574.1" stroke="#52b98a"/><line x1="687.5" y1="542" x2="687.5" y2="566.8" stroke="#52b98a"/><line x1="693.5" y1="542" x2="693.5" y2="558.8" stroke="#52b98a"/><line x1="699.5" y1="542" x2="699.5" y2="554.7" stroke="#52b98a"/><line x1="705.5" y1="542" x2="705.5" y2="553.2" stroke="#52b98a"/><line x1="711.5" y1="542" x2="711.5" y2="551.5" stroke="#52b98a"/><line x1="717.5" y1="542" x2="717.5" y2="547.9" stroke="#52b98a"/><line x1="723.5" y1="538.7" x2="723.5" y2="542" stroke="#ea4c5e"/><line x1="729.5" y1="527.3" x2="729.5" y2="542" stroke="#ea4c5e"/><line x1="735.5" y1="516.8" x2="735.5" y2="542" stroke="#ea4c5e"/><line x1="741.5" y1="507.2" x2="741.5" y2="542" stroke="#ea4c5e"/><line x1="747.5" y1="499.4" x2="747.5" y2="542" stroke="#ea4c5e"/><line x1="753.5" y1="498.2" x2="753.5" y2="542" stroke="#ea4c5e"/><line x1="759.5" y1="494.1" x2="759.5" y2="542" stroke="#ea4c5e"/><line x1="765.5" y1="492.6" x2="765.5" y2="542" stroke="#ea4c5e"/><line x1="771.5" y1="492.1" x2="771.5" y2="542" stroke="#ea4c5e"/><line x1="777.5" y1="488.5" x2="777.5" y2="542" stroke="#ea4c5e"/><line x1="783.5" y1="486.1" x2="783.5" y2="542" stroke="#ea4c5e"/><line x1="789.5" y1="489.2" x2="789.5" y2="542" stroke="#ea4c5e"/><line x1="795.5" y1="495.0" x2="795.5" y2="542" stroke="#ea4c5e"/><line x1="801.5" y1="506.2" x2="801.5" y2="542" stroke="#ea4c5e"/><line x1="807.5" y1="515.2" x2="807.5" y2="542" stroke="#ea4c5e"/><line x1="813.5" y1="524.1" x2="813.5" y2="542" stroke="#ea4c5e"/><line x1="819.5" y1="528.0" x2="819.5" y2="542" stroke="#ea4c5e"/><line x1="825.5" y1="532.8" x2="825.5" y2="542" stroke="#ea4c5e"/><line x1="831.5" y1="527.3" x2="831.5" y2="542" stroke="#ea4c5e"/><line x1="837.5" y1="524.8" x2="837.5" y2="542" stroke="#ea4c5e"/><line x1="843.5" y1="526.0" x2="843.5" y2="542" stroke="#ea4c5e"/><line x1="849.5" y1="528.0" x2="849.5" y2="542" stroke="#ea4c5e"/><line x1="855.5" y1="533.8" x2="855.5" y2="542" stroke="#ea4c5e"/><line x1="861.5" y1="535.2" x2="861.5" y2="542" stroke="#ea4c5e"/><line x1="867.5" y1="542" x2="867.5" y2="550.3" stroke="#52b98a"/><line x1="873.5" y1="542" x2="873.5" y2="563.6" stroke="#52b98a"/><line x1="879.5" y1="542" x2="879.5" y2="569.2" stroke="#52b98a"/><line x1="885.5" y1="542" x2="885.5" y2="566.7" stroke="#52b98a"/><line x1="891.5" y1="542" x2="891.5" y2="563.6" stroke="#52b98a"/><line x1="897.5" y1="542" x2="897.5" y2="562.9" stroke="#52b98a"/><line x1="903.5" y1="542" x2="903.5" y2="560.0" stroke="#52b98a"/><line x1="909.5" y1="542" x2="909.5" y2="557.5" stroke="#52b98a"/><line x1="915.5" y1="542" x2="915.5" y2="555.6" stroke="#52b98a"/><line x1="921.5" y1="542" x2="921.5" y2="549.1" stroke="#52b98a"/><line x1="927.5" y1="542" x2="927.5" y2="543.0" stroke="#52b98a"/><line x1="933.5" y1="537.7" x2="933.5" y2="542" stroke="#ea4c5e"/><line x1="939.5" y1="533.8" x2="939.5" y2="542" stroke="#ea4c5e"/><line x1="945.5" y1="532.1" x2="945.5" y2="542" stroke="#ea4c5e"/><line x1="951.5" y1="528.0" x2="951.5" y2="542" stroke="#ea4c5e"/><line x1="957.5" y1="529.7" x2="957.5" y2="542" stroke="#ea4c5e"/><line x1="963.5" y1="530.9" x2="963.5" y2="542" stroke="#ea4c5e"/><line x1="969.5" y1="529.7" x2="969.5" y2="542" stroke="#ea4c5e"/><line x1="975.5" y1="538.6" x2="975.5" y2="542" stroke="#ea4c5e"/><line x1="981.5" y1="542" x2="981.5" y2="547.8" stroke="#52b98a"/><line x1="987.5" y1="542" x2="987.5" y2="554.6" stroke="#52b98a"/><line x1="993.5" y1="542" x2="993.5" y2="561.2" stroke="#52b98a"/><line x1="999.5" y1="542" x2="999.5" y2="561.9" stroke="#52b98a"/><line x1="1005.5" y1="542" x2="1005.5" y2="567.7" stroke="#52b98a"/><line x1="1011.5" y1="542" x2="1011.5" y2="573.3" stroke="#52b98a"/><line x1="1017.5" y1="542" x2="1017.5" y2="580.6" stroke="#52b98a"/><line x1="1023.5" y1="542" x2="1023.5" y2="586.6" stroke="#52b98a"/><line x1="1029.5" y1="542" x2="1029.5" y2="576.9" stroke="#52b98a"/><line x1="1035.5" y1="542" x2="1035.5" y2="571.6" stroke="#52b98a"/><line x1="1041.5" y1="542" x2="1041.5" y2="566.7" stroke="#52b98a"/></g><svg x="0" y="463" width="1139" height="180" viewBox="0 463 1139 180" overflow="hidden"><polyline points="76.0,487.8 77.0,488.4 78.0,489.1 79.0,489.8 80.0,490.4 81.0,491.1 82.0,491.8 83.0,492.4 84.0,493.1 85.0,493.8 86.0,494.4 87.0,495.1 88.0,495.7 89.0,496.4 90.0,497.1 91.0,497.7 92.0,498.4 93.0,499.1 94.0,499.7 95.0,500.4 96.0,501.1 97.0,501.7 98.0,502.5 99.0,503.3 100.0,504.2 101.0,505.0 102.0,505.8 103.0,506.6 104.0,507.4 105.0,508.2 106.0,509.0 107.0,509.9 108.0,510.7 109.0,511.5 110.0,512.3 111.0,513.1 112.0,513.9 113.0,514.7 114.0,515.6 115.0,516.4 116.0,517.2 117.0,518.0 118.0,518.8 119.0,519.6 120.0,520.4 121.0,521.2 122.0,522.1 123.0,522.9 124.0,523.7 125.0,524.5 126.0,525.3 127.0,526.1 128.0,526.9 129.0,527.7 130.0,528.5 131.0,529.3 132.0,530.1 133.0,531.0 134.0,531.8 135.0,532.6 136.0,533.4 137.0,534.1 138.0,534.8 139.0,535.4 140.0,536.1 141.0,536.8 142.0,537.5 143.0,538.2 144.0,538.9 145.0,539.6 146.0,540.3 147.0,541.0 148.0,541.7 149.0,542.4 150.0,543.1 151.0,543.8 152.0,544.4 153.0,545.1 154.0,545.5 155.0,545.8 156.0,546.2 157.0,546.6 158.0,547.0 159.0,547.4 160.0,547.8 161.0,548.1 162.0,548.5 163.0,548.9 164.0,549.3 165.0,549.7 166.0,550.0 167.0,550.4 168.0,550.8 169.0,551.2 170.0,551.6 171.0,551.8 172.0,552.1 173.0,552.4 174.0,552.7 175.0,553.0 176.0,553.2 177.0,553.5 178.0,553.8 179.0,554.1 180.0,554.4 181.0,554.6 182.0,554.9 183.0,555.2 184.0,555.5 185.0,555.5 186.0,555.4 187.0,555.3 188.0,555.2 189.0,555.1 190.0,554.9 191.0,554.8 192.0,554.7 193.0,554.6 194.0,554.5 195.0,554.4 196.0,554.2 197.0,554.1 198.0,554.0 199.0,553.9 200.0,553.5 201.0,553.2 202.0,552.9 203.0,552.6 204.0,552.2 205.0,551.9 206.0,551.6 207.0,551.2 208.0,550.9 209.0,550.6 210.0,550.3 211.0,549.9 212.0,549.6 213.0,549.3 214.0,548.9 215.0,548.5 216.0,548.2 217.0,547.8 218.0,547.4 219.0,547.0 220.0,546.6 221.0,546.3 222.0,545.9 223.0,545.5 224.0,545.1 225.0,544.8 226.0,544.4 227.0,544.0 228.0,543.6 229.0,543.2 230.0,542.9 231.0,542.5 232.0,542.1 233.0,541.7 234.0,541.3 235.0,540.9 236.0,540.5 237.0,540.1 238.0,539.7 239.0,539.3 240.0,538.8 241.0,538.4 242.0,538.0 243.0,537.6 244.0,537.2 245.0,536.8 246.0,536.4 247.0,536.0 248.0,535.6 249.0,535.3 250.0,535.0 251.0,534.7 252.0,534.4 253.0,534.1 254.0,533.8 255.0,533.4 256.0,533.1 257.0,532.8 258.0,532.8 259.0,532.9 260.0,532.9 261.0,532.9 262.0,532.9 263.0,532.8 264.0,532.8 265.0,532.8 266.0,532.8 267.0,532.8 268.0,532.8 269.0,532.3 270.0,532.2 271.0,532.2 272.0,532.1 273.0,531.9 274.0,531.7 275.0,531.5 276.0,531.3 277.0,531.1 278.0,530.9 279.0,530.7 280.0,530.5 281.0,530.3 282.0,530.1 283.0,529.9 284.0,529.7 285.0,529.7 286.0,529.8 287.0,529.9 288.0,529.9 289.0,530.0 290.0,530.1 291.0,530.1 292.0,530.2 293.0,530.2 294.0,530.3 295.0,530.4 296.0,530.4 297.0,530.5 298.0,530.6 299.0,530.6 300.0,530.7 301.0,530.7 302.0,530.8 303.0,530.9 304.0,531.0 305.0,531.3 306.0,531.5 307.0,531.8 308.0,532.0 309.0,532.3 310.0,532.6 311.0,532.8 312.0,533.1 313.0,533.3 314.0,533.6 315.0,533.9 316.0,534.1 317.0,534.4 318.0,534.6 319.0,534.9 320.0,535.1 321.0,535.3 322.0,535.2 323.0,535.1 324.0,535.1 325.0,535.0 326.0,534.9 327.0,534.9 328.0,534.8 329.0,534.7 330.0,534.7 331.0,534.6 332.0,534.5 333.0,534.4 334.0,534.0 335.0,533.6 336.0,533.3 337.0,532.9 338.0,532.5 339.0,532.2 340.0,531.8 341.0,531.4 342.0,531.0 343.0,530.7 344.0,530.3 345.0,529.9 346.0,529.6 347.0,529.2 348.0,528.8 349.0,528.5 350.0,528.1 351.0,527.7 352.0,527.3 353.0,526.8 354.0,526.3 355.0,525.8 356.0,525.3 357.0,524.8 358.0,524.3 359.0,523.8 360.0,523.3 361.0,522.8 362.0,522.3 363.0,521.8 364.0,521.3 365.0,520.8 366.0,520.3 367.0,519.8 368.0,519.3 369.0,518.8 370.0,518.7 371.0,518.6 372.0,518.5 373.0,518.3 374.0,518.2 375.0,518.1 376.0,518.0 377.0,517.9 378.0,517.8 379.0,517.6 380.0,517.5 381.0,517.4 382.0,517.3 383.0,517.2 384.0,517.0 385.0,516.9 386.0,516.8 387.0,516.8 388.0,516.9 389.0,516.9 390.0,516.9 391.0,517.0 392.0,517.0 393.0,517.0 394.0,517.1 395.0,517.1 396.0,517.1 397.0,517.2 398.0,517.2 399.0,517.2 400.0,517.3 401.0,517.3 402.0,517.3 403.0,517.4 404.0,517.4 405.0,517.4 406.0,517.5 407.0,517.5 408.0,517.5 409.0,517.6 410.0,517.6 411.0,517.7 412.0,518.0 413.0,518.2 414.0,518.4 415.0,518.6 416.0,518.8 417.0,519.0 418.0,519.2 419.0,519.4 420.0,519.7 421.0,519.9 422.0,520.1 423.0,520.3 424.0,520.5 425.0,520.7 426.0,520.9 427.0,521.1 428.0,521.3 429.0,521.6 430.0,521.9 431.0,522.5 432.0,523.0 433.0,523.6 434.0,524.2 435.0,524.8 436.0,525.3 437.0,525.9 438.0,526.5 439.0,527.1 440.0,528.1 441.0,529.4 442.0,530.7 443.0,532.0 444.0,533.3 445.0,534.6 446.0,535.9 447.0,537.2 448.0,538.5 449.0,539.8 450.0,541.1 451.0,542.4 452.0,543.9 453.0,545.0 454.0,546.1 455.0,547.2 456.0,548.3 457.0,549.5 458.0,550.6 459.0,551.7 460.0,552.8 461.0,554.0 462.0,555.1 463.0,556.2 464.0,557.3 465.0,558.4 466.0,559.5 467.0,560.3 468.0,561.0 469.0,561.7 470.0,562.4 471.0,563.1 472.0,563.8 473.0,564.4 474.0,565.1 475.0,565.8 476.0,566.5 477.0,567.2 478.0,567.8 479.0,568.5 480.0,569.2 481.0,569.9 482.0,570.6 483.0,571.3 484.0,571.7 485.0,571.8 486.0,572.0 487.0,572.1 488.0,572.3 489.0,572.4 490.0,572.6 491.0,572.7 492.0,572.9 493.0,573.0 494.0,573.1 495.0,573.3 496.0,573.4 497.0,573.6 498.0,573.7 499.0,573.9 500.0,574.0 501.0,574.1 502.0,574.2 503.0,574.2 504.0,574.3 505.0,574.3 506.0,574.4 507.0,574.4 508.0,574.4 509.0,574.5 510.0,574.5 511.0,574.6 512.0,574.6 513.0,574.7 514.0,574.7 515.0,574.8 516.0,574.8 517.0,574.9 518.0,574.9 519.0,575.0 520.0,575.0 521.0,575.2 522.0,575.4 523.0,575.6 524.0,575.8 525.0,576.0 526.0,576.2 527.0,576.3 528.0,576.5 529.0,576.7 530.0,576.9 531.0,577.1 532.0,577.3 533.0,577.5 534.0,577.7 535.0,577.9 536.0,578.0 537.0,578.3 538.0,579.0 539.0,579.6 540.0,580.3 541.0,580.9 542.0,581.5 543.0,582.2 544.0,582.8 545.0,583.5 546.0,584.1 547.0,584.7 548.0,585.4 549.0,586.0 550.0,586.7 551.0,587.3 552.0,587.9 553.0,588.6 554.0,589.2 555.0,589.8 556.0,590.5 557.0,591.1 558.0,591.7 559.0,592.3 560.0,593.0 561.0,593.6 562.0,594.2 563.0,594.8 564.0,595.5 565.0,596.1 566.0,596.7 567.0,597.3 568.0,598.0 569.0,598.6 570.0,599.2 571.0,599.8 572.0,600.5 573.0,601.1 574.0,601.3 575.0,601.3 576.0,601.4 577.0,601.5 578.0,601.6 579.0,601.7 580.0,601.8 581.0,601.8 582.0,601.9 583.0,602.0 584.0,602.1 585.0,602.2 586.0,602.3 587.0,602.3 588.0,602.3 589.0,601.9 590.0,601.5 591.0,601.1 592.0,600.7 593.0,600.2 594.0,599.8 595.0,599.4 596.0,599.0 597.0,598.6 598.0,598.2 599.0,597.8 600.0,597.4 601.0,596.9 602.0,596.5 603.0,596.1 604.0,595.8 605.0,595.4 606.0,595.0 607.0,594.6 608.0,594.3 609.0,593.9 610.0,593.5 611.0,593.2 612.0,592.8 613.0,592.4 614.0,592.0 615.0,591.7 616.0,591.3 617.0,591.1 618.0,591.4 619.0,591.7 620.0,592.1 621.0,592.4 622.0,592.7 623.0,593.1 624.0,593.4 625.0,593.8 626.0,594.1 627.0,594.4 628.0,594.8 629.0,595.1 630.0,595.4 631.0,595.8 632.0,596.1 633.0,596.5 634.0,596.9 635.0,597.2 636.0,597.6 637.0,597.9 638.0,598.3 639.0,598.7 640.0,599.8 641.0,600.2 642.0,600.5 643.0,600.8 644.0,601.2 645.0,601.6 646.0,602.1 647.0,602.6 648.0,603.1 649.0,603.6 650.0,604.1 651.0,604.7 652.0,605.4 653.0,606.4 654.0,607.0 655.0,607.7 656.0,608.4 657.0,609.1 658.0,609.9 659.0,610.7 660.0,611.5 661.0,612.3 662.0,613.1 663.0,614.0 664.0,614.8 665.0,615.7 666.0,616.5 667.0,617.3 668.0,618.2 669.0,619.0 670.0,619.8 671.0,620.7 672.0,621.5 673.0,622.2 674.0,622.8 675.0,623.4 676.0,624.0 677.0,624.5 678.0,625.1 679.0,625.7 680.0,626.3 681.0,626.8 682.0,627.4 683.0,628.0 684.0,628.5 685.0,628.9 686.0,629.4 687.0,629.9 688.0,630.3 689.0,630.8 690.0,631.3 691.0,631.7 692.0,632.2 693.0,632.6 694.0,633.0 695.0,633.3 696.0,633.6 697.0,633.9 698.0,634.1 699.0,634.4 700.0,634.7 701.0,634.9 702.0,635.2 703.0,635.5 704.0,635.8 705.0,636.0 706.0,636.3 707.0,636.6 708.0,636.8 709.0,636.9 710.0,637.1 711.0,637.2 712.0,637.4 713.0,637.5 714.0,637.7 715.0,637.8 716.0,638.0 717.0,638.1 718.0,638.3 719.0,638.3 720.0,638.1 721.0,637.7 722.0,637.4 723.0,637.0 724.0,636.7 725.0,636.4 726.0,636.0 727.0,635.6 728.0,635.2 729.0,634.8 730.0,634.4 731.0,634.0 732.0,633.4 733.0,632.8 734.0,632.2 735.0,631.6 736.0,631.1 737.0,630.5 738.0,629.9 739.0,629.3 740.0,628.7 741.0,628.1 742.0,627.3 743.0,626.6 744.0,625.9 745.0,625.1 746.0,624.3 747.0,623.5 748.0,622.6 749.0,621.7 750.0,620.9 751.0,620.0 752.0,619.0 753.0,618.0 754.0,617.1 755.0,616.1 756.0,615.1 757.0,614.2 758.0,613.2 759.0,612.2 760.0,611.2 761.0,610.2 762.0,609.1 763.0,608.0 764.0,606.9 765.0,605.8 766.0,604.7 767.0,603.6 768.0,602.5 769.0,601.4 770.0,600.3 771.0,598.5 772.0,597.3 773.0,596.1 774.0,595.0 775.0,593.8 776.0,592.5 777.0,591.3 778.0,590.1 779.0,588.8 780.0,587.6 781.0,586.3 782.0,585.1 783.0,583.9 784.0,582.6 785.0,581.4 786.0,580.1 787.0,578.9 788.0,577.7 789.0,576.4 790.0,575.4 791.0,574.6 792.0,573.8 793.0,573.0 794.0,572.3 795.0,571.5 796.0,570.7 797.0,569.9 798.0,569.1 799.0,568.3 800.0,567.5 801.0,566.8 802.0,566.0 803.0,565.2 804.0,564.4 805.0,564.1 806.0,563.7 807.0,563.4 808.0,563.0 809.0,562.7 810.0,562.4 811.0,562.0 812.0,561.7 813.0,561.4 814.0,561.0 815.0,560.7 816.0,560.3 817.0,560.0 818.0,559.7 819.0,559.4 820.0,559.1 821.0,558.8 822.0,558.5 823.0,558.2 824.0,557.9 825.0,557.6 826.0,557.3 827.0,557.0 828.0,556.7 829.0,556.4 830.0,556.1 831.0,555.8 832.0,555.5 833.0,555.2 834.0,554.9 835.0,554.6 836.0,554.7 837.0,554.4 838.0,554.1 839.0,553.8 840.0,553.6 841.0,553.3 842.0,553.0 843.0,552.8 844.0,552.5 845.0,553.3 846.0,553.1 847.0,552.9 848.0,552.7 849.0,552.5 850.0,552.3 851.0,552.1 852.0,551.9 853.0,551.7 854.0,551.5 855.0,551.3 856.0,551.1 857.0,550.9 858.0,550.7 859.0,550.5 860.0,550.3 861.0,550.1 862.0,549.9 863.0,549.9 864.0,550.3 865.0,550.7 866.0,551.2 867.0,551.6 868.0,552.0 869.0,552.4 870.0,552.8 871.0,553.2 872.0,553.6 873.0,554.1 874.0,554.5 875.0,554.9 876.0,555.3 877.0,555.7 878.0,556.1 879.0,556.5 880.0,556.9 881.0,557.4 882.0,557.8 883.0,558.2 884.0,558.6 885.0,559.0 886.0,559.5 887.0,559.9 888.0,560.3 889.0,560.8 890.0,561.2 891.0,561.6 892.0,562.1 893.0,562.5 894.0,562.9 895.0,563.4 896.0,563.8 897.0,564.2 898.0,564.7 899.0,565.1 900.0,565.5 901.0,566.0 902.0,566.4 903.0,566.9 904.0,567.3 905.0,567.6 906.0,567.9 907.0,568.2 908.0,568.5 909.0,568.9 910.0,569.2 911.0,569.5 912.0,569.8 913.0,570.1 914.0,570.4 915.0,570.8 916.0,571.1 917.0,571.4 918.0,571.7 919.0,572.0 920.0,572.3 921.0,572.6 922.0,572.4 923.0,572.2 924.0,572.1 925.0,571.9 926.0,571.7 927.0,571.5 928.0,571.4 929.0,571.2 930.0,571.0 931.0,570.9 932.0,570.7 933.0,570.5 934.0,570.3 935.0,570.2 936.0,570.0 937.0,569.8 938.0,569.6 939.0,569.4 940.0,569.1 941.0,568.9 942.0,568.6 943.0,568.4 944.0,568.1 945.0,567.9 946.0,567.6 947.0,567.4 948.0,567.1 949.0,566.9 950.0,566.6 951.0,566.4 952.0,566.1 953.0,565.9 954.0,565.6 955.0,565.4 956.0,565.1 957.0,564.9 958.0,564.7 959.0,564.5 960.0,564.9 961.0,564.7 962.0,564.6 963.0,564.4 964.0,564.2 965.0,564.0 966.0,563.8 967.0,563.6 968.0,563.5 969.0,563.3 970.0,563.1 971.0,562.9 972.0,562.8 973.0,562.8 974.0,562.7 975.0,562.7 976.0,562.7 977.0,562.8 978.0,563.0 979.0,563.1 980.0,563.3 981.0,563.4 982.0,563.6 983.0,563.7 984.0,563.9 985.0,564.0 986.0,564.2 987.0,564.6 988.0,564.9 989.0,565.3 990.0,565.6 991.0,566.0 992.0,566.3 993.0,566.7 994.0,567.0 995.0,567.4 996.0,567.7 997.0,568.1 998.0,568.4 999.0,568.8 1000.0,569.1 1001.0,569.5 1002.0,570.0 1003.0,570.6 1004.0,571.4 1005.0,572.1 1006.0,572.8 1007.0,573.5 1008.0,574.2 1009.0,575.0 1010.0,575.7 1011.0,576.4 1012.0,577.1 1013.0,577.8 1014.0,578.6 1015.0,579.3 1016.0,580.1 1017.0,580.8 1018.0,581.6 1019.0,582.4 1020.0,583.2 1021.0,584.0 1022.0,584.7 1023.0,585.5 1024.0,586.2 1025.0,586.9 1026.0,587.6 1027.0,588.3 1028.0,589.0 1029.0,589.7 1030.0,590.4 1031.0,590.9 1032.0,591.5 1033.0,592.1 1034.0,592.7 1035.0,593.2 1036.0,593.8 1037.0,594.4 1038.0,595.0 1039.0,595.5 1040.0,596.1" fill="none" stroke="#e3da0a" stroke-width="1" stroke-linejoin="round" shape-rendering="crispEdges"/><polyline points="76.0,501.8 77.0,502.6 78.0,503.3 79.0,504.1 80.0,504.8 81.0,505.6 82.0,506.3 83.0,507.1 84.0,507.8 85.0,508.6 86.0,509.3 87.0,510.1 88.0,510.8 89.0,511.6 90.0,512.3 91.0,513.1 92.0,513.8 93.0,514.7 94.0,515.6 95.0,516.6 96.0,517.5 97.0,518.4 98.0,519.3 99.0,520.2 100.0,521.1 101.0,522.0 102.0,522.9 103.0,523.8 104.0,524.7 105.0,525.7 106.0,526.6 107.0,527.4 108.0,528.0 109.0,528.6 110.0,529.2 111.0,529.8 112.0,530.3 113.0,530.9 114.0,531.5 115.0,532.1 116.0,532.7 117.0,533.3 118.0,533.9 119.0,534.5 120.0,535.0 121.0,535.6 122.0,536.5 123.0,537.5 124.0,538.5 125.0,539.5 126.0,540.5 127.0,541.5 128.0,542.5 129.0,543.4 130.0,544.4 131.0,545.4 132.0,546.4 133.0,547.4 134.0,548.4 135.0,549.4 136.0,550.4 137.0,551.1 138.0,551.8 139.0,552.5 140.0,553.2 141.0,553.9 142.0,554.6 143.0,555.3 144.0,556.0 145.0,556.7 146.0,557.4 147.0,558.1 148.0,558.8 149.0,559.2 150.0,559.7 151.0,560.1 152.0,560.6 153.0,561.0 154.0,561.4 155.0,561.9 156.0,562.3 157.0,562.8 158.0,563.2 159.0,563.6 160.0,563.1 161.0,562.7 162.0,562.2 163.0,561.8 164.0,561.4 165.0,560.9 166.0,560.5 167.0,560.0 168.0,559.6 169.0,559.2 170.0,558.8 171.0,558.7 172.0,558.7 173.0,558.6 174.0,558.6 175.0,558.6 176.0,558.5 177.0,558.5 178.0,558.4 179.0,558.4 180.0,558.3 181.0,558.3 182.0,558.2 183.0,558.2 184.0,558.1 185.0,557.7 186.0,557.1 187.0,556.4 188.0,555.8 189.0,555.1 190.0,554.5 191.0,553.8 192.0,553.2 193.0,552.6 194.0,551.9 195.0,551.3 196.0,550.6 197.0,550.1 198.0,549.8 199.0,549.4 200.0,549.0 201.0,548.7 202.0,548.3 203.0,547.9 204.0,547.6 205.0,547.2 206.0,546.8 207.0,546.5 208.0,546.1 209.0,545.6 210.0,545.0 211.0,544.3 212.0,543.6 213.0,543.0 214.0,542.3 215.0,541.6 216.0,541.0 217.0,540.3 218.0,539.7 219.0,539.0 220.0,538.3 221.0,537.7 222.0,537.0 223.0,536.3 224.0,535.9 225.0,535.4 226.0,535.0 227.0,534.6 228.0,534.2 229.0,533.7 230.0,533.3 231.0,532.9 232.0,532.4 233.0,532.0 234.0,531.3 235.0,530.6 236.0,530.0 237.0,529.3 238.0,528.6 239.0,527.9 240.0,527.3 241.0,526.6 242.0,525.9 243.0,525.6 244.0,525.6 245.0,525.6 246.0,525.6 247.0,525.6 248.0,525.6 249.0,525.6 250.0,525.6 251.0,525.6 252.0,525.6 253.0,526.0 254.0,526.6 255.0,527.2 256.0,527.7 257.0,528.3 258.0,528.9 259.0,529.4 260.0,530.5 261.0,531.1 262.0,531.8 263.0,532.5 264.0,533.1 265.0,533.8 266.0,534.4 267.0,535.1 268.0,535.2 269.0,533.7 270.0,532.8 271.0,531.9 272.0,530.9 273.0,530.0 274.0,529.1 275.0,528.2 276.0,527.2 277.0,526.3 278.0,525.4 279.0,524.5 280.0,524.2 281.0,524.4 282.0,524.6 283.0,524.8 284.0,525.0 285.0,525.2 286.0,525.4 287.0,525.6 288.0,525.8 289.0,526.0 290.0,526.2 291.0,526.4 292.0,526.7 293.0,527.2 294.0,527.7 295.0,528.1 296.0,528.6 297.0,529.1 298.0,529.6 299.0,530.0 300.0,530.5 301.0,531.0 302.0,531.4 303.0,531.9 304.0,532.4 305.0,532.9 306.0,533.3 307.0,533.8 308.0,534.3 309.0,534.9 310.0,535.6 311.0,536.4 312.0,537.1 313.0,537.8 314.0,538.6 315.0,539.3 316.0,540.1 317.0,540.8 318.0,541.6 319.0,542.3 320.0,543.1 321.0,543.1 322.0,542.2 323.0,541.3 324.0,540.3 325.0,539.4 326.0,538.5 327.0,537.5 328.0,536.6 329.0,535.7 330.0,534.7 331.0,533.8 332.0,532.9 333.0,532.0 334.0,531.0 335.0,530.1 336.0,529.2 337.0,528.2 338.0,527.3 339.0,526.4 340.0,525.4 341.0,524.5 342.0,523.6 343.0,522.8 344.0,522.2 345.0,521.6 346.0,521.0 347.0,520.3 348.0,519.7 349.0,519.1 350.0,518.5 351.0,517.8 352.0,517.2 353.0,516.6 354.0,516.0 355.0,515.3 356.0,514.7 357.0,514.1 358.0,513.5 359.0,512.8 360.0,512.2 361.0,511.6 362.0,511.0 363.0,510.3 364.0,509.7 365.0,509.9 366.0,510.2 367.0,510.5 368.0,510.8 369.0,511.2 370.0,511.5 371.0,511.8 372.0,512.2 373.0,512.5 374.0,512.8 375.0,513.2 376.0,513.5 377.0,513.8 378.0,514.1 379.0,514.4 380.0,514.6 381.0,514.7 382.0,514.9 383.0,515.0 384.0,515.1 385.0,515.3 386.0,515.4 387.0,515.6 388.0,515.7 389.0,515.8 390.0,516.0 391.0,516.1 392.0,516.3 393.0,516.4 394.0,516.5 395.0,516.7 396.0,516.8 397.0,516.9 398.0,516.9 399.0,517.0 400.0,517.0 401.0,517.1 402.0,517.1 403.0,517.2 404.0,517.3 405.0,517.3 406.0,517.4 407.0,517.4 408.0,517.5 409.0,517.5 410.0,517.6 411.0,518.1 412.0,518.7 413.0,519.4 414.0,520.1 415.0,520.7 416.0,521.4 417.0,522.1 418.0,522.8 419.0,523.4 420.0,524.1 421.0,524.3 422.0,524.4 423.0,524.6 424.0,524.7 425.0,524.9 426.0,525.0 427.0,525.2 428.0,525.3 429.0,525.5 430.0,526.1 431.0,527.9 432.0,529.7 433.0,531.5 434.0,533.3 435.0,535.1 436.0,536.9 437.0,538.7 438.0,540.5 439.0,542.3 440.0,544.4 441.0,546.8 442.0,549.1 443.0,551.4 444.0,553.8 445.0,556.1 446.0,558.5 447.0,560.8 448.0,563.2 449.0,565.5 450.0,567.9 451.0,570.2 452.0,574.2 453.0,575.8 454.0,577.3 455.0,578.3 456.0,579.4 457.0,580.4 458.0,581.4 459.0,582.4 460.0,583.5 461.0,583.6 462.0,584.3 463.0,584.5 464.0,584.7 465.0,584.9 466.0,585.1 467.0,585.3 468.0,585.5 469.0,585.7 470.0,585.9 471.0,586.1 472.0,586.2 473.0,586.1 474.0,586.0 475.0,586.0 476.0,585.9 477.0,585.9 478.0,585.8 479.0,585.8 480.0,585.7 481.0,585.6 482.0,585.6 483.0,585.5 484.0,585.1 485.0,584.4 486.0,583.7 487.0,583.0 488.0,582.3 489.0,581.6 490.0,580.9 491.0,580.2 492.0,579.5 493.0,578.8 494.0,578.1 495.0,577.4 496.0,576.8 497.0,576.4 498.0,575.9 499.0,575.5 500.0,575.1 501.0,574.6 502.0,574.2 503.0,573.7 504.0,573.3 505.0,572.8 506.0,572.4 507.0,572.0 508.0,571.7 509.0,572.0 510.0,572.4 511.0,572.8 512.0,573.2 513.0,573.5 514.0,573.9 515.0,574.3 516.0,574.7 517.0,575.0 518.0,575.4 519.0,575.8 520.0,576.1 521.0,576.5 522.0,576.9 523.0,577.4 524.0,577.9 525.0,578.4 526.0,579.0 527.0,579.5 528.0,580.0 529.0,580.6 530.0,581.1 531.0,581.6 532.0,582.2 533.0,582.7 534.0,583.2 535.0,583.7 536.0,584.3 537.0,585.0 538.0,586.4 539.0,587.9 540.0,589.3 541.0,590.7 542.0,592.2 543.0,593.6 544.0,595.1 545.0,596.0 546.0,596.9 547.0,597.8 548.0,598.8 549.0,599.7 550.0,600.6 551.0,601.5 552.0,602.4 553.0,603.3 554.0,604.2 555.0,605.1 556.0,606.0 557.0,607.0 558.0,607.9 559.0,608.7 560.0,609.2 561.0,609.7 562.0,610.2 563.0,610.7 564.0,611.2 565.0,611.7 566.0,612.2 567.0,612.7 568.0,613.2 569.0,613.7 570.0,614.2 571.0,614.7 572.0,615.2 573.0,615.7 574.0,614.9 575.0,613.8 576.0,612.7 577.0,611.6 578.0,610.5 579.0,609.4 580.0,608.3 581.0,607.2 582.0,606.1 583.0,604.9 584.0,603.8 585.0,602.7 586.0,601.7 587.0,600.7 588.0,599.7 589.0,598.7 590.0,597.7 591.0,596.7 592.0,595.8 593.0,594.8 594.0,593.8 595.0,592.8 596.0,591.8 597.0,590.8 598.0,589.9 599.0,589.2 600.0,588.4 601.0,587.7 602.0,587.0 603.0,586.2 604.0,585.5 605.0,584.7 606.0,584.0 607.0,583.2 608.0,582.5 609.0,581.7 610.0,581.6 611.0,582.3 612.0,582.9 613.0,583.6 614.0,584.3 615.0,585.0 616.0,585.7 617.0,586.3 618.0,587.0 619.0,587.7 620.0,589.0 621.0,590.7 622.0,592.3 623.0,593.9 624.0,595.5 625.0,597.1 626.0,598.7 627.0,600.4 628.0,602.0 629.0,603.6 630.0,604.1 631.0,604.6 632.0,605.1 633.0,605.7 634.0,606.2 635.0,606.7 636.0,607.2 637.0,607.4 638.0,607.4 639.0,607.5 640.0,607.6 641.0,607.7 642.0,607.8 643.0,607.9 644.0,608.1 645.0,608.2 646.0,609.2 647.0,610.9 648.0,612.7 649.0,614.4 650.0,616.1 651.0,617.9 652.0,619.6 653.0,621.2 654.0,622.6 655.0,624.1 656.0,625.5 657.0,627.0 658.0,628.4 659.0,629.9 660.0,631.3 661.0,632.8 662.0,634.3 663.0,635.3 664.0,636.2 665.0,637.2 666.0,638.1 667.0,639.1 668.0,640.1 669.0,641.0 670.0,641.6 671.0,641.8 672.0,642.0 673.0,642.1 674.0,642.3 675.0,642.4 676.0,642.4 677.0,642.4 678.0,642.4 679.0,642.4 680.0,642.4 681.0,642.4 682.0,642.4 683.0,642.4 684.0,642.4 685.0,642.4 686.0,642.4 687.0,642.4 688.0,642.4 689.0,642.4 690.0,642.4 691.0,642.4 692.0,642.4 693.0,642.4 694.0,642.4 695.0,642.4 696.0,642.4 697.0,642.4 698.0,642.4 699.0,642.4 700.0,642.4 701.0,642.4 702.0,642.4 703.0,642.4 704.0,642.4 705.0,642.4 706.0,642.4 707.0,642.4 708.0,642.4 709.0,642.4 710.0,642.3 711.0,642.1 712.0,642.0 713.0,641.9 714.0,641.6 715.0,641.1 716.0,640.6 717.0,640.1 718.0,639.6 719.0,639.1 720.0,638.3 721.0,637.4 722.0,636.3 723.0,635.1 724.0,634.0 725.0,632.8 726.0,631.7 727.0,630.4 728.0,629.0 729.0,627.6 730.0,626.3 731.0,624.9 732.0,623.6 733.0,622.2 734.0,620.8 735.0,619.5 736.0,618.1 737.0,616.7 738.0,615.3 739.0,613.8 740.0,612.3 741.0,610.9 742.0,609.4 743.0,607.9 744.0,606.5 745.0,605.0 746.0,603.5 747.0,602.0 748.0,600.6 749.0,599.2 750.0,596.8 751.0,595.7 752.0,594.5 753.0,593.4 754.0,592.3 755.0,591.2 756.0,590.0 757.0,588.9 758.0,587.8 759.0,586.8 760.0,585.8 761.0,584.8 762.0,583.8 763.0,582.8 764.0,581.8 765.0,580.9 766.0,579.9 767.0,578.9 768.0,577.9 769.0,576.9 770.0,575.9 771.0,574.4 772.0,572.9 773.0,571.3 774.0,569.8 775.0,568.2 776.0,566.7 777.0,565.1 778.0,563.6 779.0,562.0 780.0,560.5 781.0,559.0 782.0,557.4 783.0,556.6 784.0,555.9 785.0,555.2 786.0,554.6 787.0,553.9 788.0,553.3 789.0,552.6 790.0,551.9 791.0,551.3 792.0,550.6 793.0,550.0 794.0,549.3 795.0,549.2 796.0,549.5 797.0,549.7 798.0,549.9 799.0,550.1 800.0,550.3 801.0,550.5 802.0,550.7 803.0,551.0 804.0,551.2 805.0,551.4 806.0,551.6 807.0,551.8 808.0,552.0 809.0,552.2 810.0,552.3 811.0,552.4 812.0,552.5 813.0,552.5 814.0,552.6 815.0,552.7 816.0,552.8 817.0,552.9 818.0,553.0 819.0,553.0 820.0,553.1 821.0,553.2 822.0,553.7 823.0,554.2 824.0,554.7 825.0,555.2 826.0,555.4 827.0,554.5 828.0,553.6 829.0,552.8 830.0,551.9 831.0,551.0 832.0,550.1 833.0,549.2 834.0,548.8 835.0,548.4 836.0,547.7 837.0,547.4 838.0,547.1 839.0,546.8 840.0,546.5 841.0,546.2 842.0,546.0 843.0,545.7 844.0,545.4 845.0,545.5 846.0,545.4 847.0,545.4 848.0,545.5 849.0,545.5 850.0,545.5 851.0,545.6 852.0,545.6 853.0,545.7 854.0,545.7 855.0,545.7 856.0,545.8 857.0,545.8 858.0,545.8 859.0,545.9 860.0,545.9 861.0,546.8 862.0,547.9 863.0,549.0 864.0,550.1 865.0,551.2 866.0,552.3 867.0,553.4 868.0,554.8 869.0,556.6 870.0,558.3 871.0,560.1 872.0,561.9 873.0,563.1 874.0,564.2 875.0,565.2 876.0,566.3 877.0,567.4 878.0,568.4 879.0,569.5 880.0,570.2 881.0,570.6 882.0,570.9 883.0,571.2 884.0,571.6 885.0,571.9 886.0,572.2 887.0,572.5 888.0,572.9 889.0,573.2 890.0,573.4 891.0,573.6 892.0,573.8 893.0,574.0 894.0,574.2 895.0,574.4 896.0,574.6 897.0,574.8 898.0,575.0 899.0,575.2 900.0,575.4 901.0,575.6 902.0,575.8 903.0,576.0 904.0,576.2 905.0,576.3 906.0,576.5 907.0,576.7 908.0,576.9 909.0,577.1 910.0,577.3 911.0,577.4 912.0,577.6 913.0,577.8 914.0,578.0 915.0,577.9 916.0,577.4 917.0,576.8 918.0,576.2 919.0,575.7 920.0,575.1 921.0,574.5 922.0,574.0 923.0,573.4 924.0,572.9 925.0,572.4 926.0,571.9 927.0,571.4 928.0,570.9 929.0,570.4 930.0,569.9 931.0,569.4 932.0,568.9 933.0,568.4 934.0,567.9 935.0,567.4 936.0,566.9 937.0,566.4 938.0,565.9 939.0,565.5 940.0,565.1 941.0,564.7 942.0,564.3 943.0,563.8 944.0,563.4 945.0,563.0 946.0,562.6 947.0,562.2 948.0,561.8 949.0,561.4 950.0,561.0 951.0,560.5 952.0,560.1 953.0,559.9 954.0,559.7 955.0,559.5 956.0,559.4 957.0,559.2 958.0,559.0 959.0,558.8 960.0,558.7 961.0,558.5 962.0,558.3 963.0,558.2 964.0,558.0 965.0,557.8 966.0,557.6 967.0,557.6 968.0,558.2 969.0,558.8 970.0,559.4 971.0,559.9 972.0,560.5 973.0,561.1 974.0,560.8 975.0,561.6 976.0,562.3 977.0,563.0 978.0,563.7 979.0,564.4 980.0,565.1 981.0,565.8 982.0,566.5 983.0,567.4 984.0,568.2 985.0,569.0 986.0,569.8 987.0,570.6 988.0,571.4 989.0,572.2 990.0,573.1 991.0,573.9 992.0,574.7 993.0,575.5 994.0,576.3 995.0,577.2 996.0,578.1 997.0,578.9 998.0,579.8 999.0,580.7 1000.0,581.5 1001.0,582.4 1002.0,583.3 1003.0,584.1 1004.0,585.0 1005.0,585.9 1006.0,586.8 1007.0,587.8 1008.0,588.9 1009.0,589.9 1010.0,591.0 1011.0,592.0 1012.0,593.1 1013.0,594.5 1014.0,595.9 1015.0,597.3 1016.0,598.6 1017.0,599.9 1018.0,601.2 1019.0,602.4 1020.0,603.7 1021.0,604.9 1022.0,605.9 1023.0,607.6 1024.0,608.8 1025.0,609.9 1026.0,611.0 1027.0,612.2 1028.0,613.3 1029.0,614.4 1030.0,615.6 1031.0,616.7 1032.0,617.8 1033.0,618.9 1034.0,620.1 1035.0,621.2 1036.0,622.3 1037.0,623.5 1038.0,624.6 1039.0,625.7 1040.0,626.9 1041.0,628.0" fill="none" stroke="#f0f0f0" stroke-width="1" stroke-linejoin="round" shape-rendering="crispEdges"/></svg><g stroke="#f86e10" stroke-width="0.9" fill="none"><circle cx="221.3" cy="8" r="4"/><line x1="217" y1="8" x2="225.6" y2="8"/><line x1="221.3" y1="3.7" x2="221.3" y2="12.3"/></g><g shape-rendering="crispEdges"><rect x="233.5" y="-0.5" width="11" height="11" fill="#fff" stroke="#999" stroke-width="1"/></g><polyline points="234.5,5 236.5,2 239,4 241,1.5 244,3" fill="none" stroke="#e02020" stroke-width="1.2"/><polyline points="234.5,8 236.5,5.5 239,7 241,5 244,6" fill="none" stroke="#2040e0" stroke-width="1.2"/><g><rect x="1006.5" y="-1" width="13" height="12" fill="#070707" stroke="#b4b4b4" stroke-width="1.3"/><rect x="1022.5" y="-1" width="13" height="12" fill="#070707" stroke="#b4b4b4" stroke-width="1.3"/><rect x="1038.5" y="-1" width="13" height="12" fill="#070707" stroke="#b4b4b4" stroke-width="1.3"/><rect x="1054.5" y="-1" width="13" height="12" fill="#070707" stroke="#b4b4b4" stroke-width="1.3"/></g><g fill="#b0b0b0"><rect x="1012" y="0" width="2" height="2.5"/><rect x="1012" y="4" width="2" height="2"/><rect x="1012" y="7.5" width="2" height="2.5"/><rect x="1008" y="4" width="2.5" height="2"/><rect x="1015.5" y="4" width="2.5" height="2"/></g><g stroke="#b0b0b0" stroke-width="1" fill="none"><line x1="1025.2" y1="0" x2="1025.2" y2="9.5"/><line x1="1023.5" y1="8.7" x2="1034" y2="8.7"/><line x1="1028.5" y1="1.5" x2="1028.5" y2="6.5"/></g><polygon points="1032.5,1.5 1032.5,5.5 1029.3,3.5" fill="#b0b0b0"/><polygon points="1034.5,8.7 1032.5,7.2 1032.5,10.2" fill="#b0b0b0"/><polygon points="1025.2,0 1023.8,1.8 1026.6,1.8" fill="#b0b0b0"/><g stroke="#b0b0b0" stroke-width="1" fill="none"><line x1="1041.3" y1="0" x2="1041.3" y2="9.5"/><line x1="1039.5" y1="8.7" x2="1050" y2="8.7"/></g><polygon points="1044.3,1.3 1044.3,7.5 1049,4.4" fill="#999"/><polygon points="1050.5,8.7 1048.5,7.2 1048.5,10.2" fill="#b0b0b0"/><g stroke="#b0b0b0" stroke-width="1" fill="none"><rect x="1056.5" y="-0.5" width="3" height="10"/><line x1="1059.5" y1="4.5" x2="1064" y2="4.5"/></g><polygon points="1063,1.8 1063,7.2 1066,4.5" fill="#b0b0b0"/><g><circle cx="9.5" cy="469.5" r="3.8" fill="#fff" stroke="#000" stroke-width="1.2"/><circle cx="9.5" cy="469.5" r="2" fill="#f00"/><g stroke="#f00" stroke-width="1.2"><line x1="14.7" y1="469.5" x2="16.7" y2="469.5"/><line x1="4.3" y1="469.5" x2="2.3" y2="469.5"/><line x1="9.5" y1="474.7" x2="9.5" y2="476.7"/><line x1="9.5" y1="464.3" x2="9.5" y2="462.3"/><line x1="13.2" y1="473.2" x2="14.6" y2="474.6"/><line x1="5.8" y1="473.2" x2="4.4" y2="474.6"/><line x1="13.2" y1="465.8" x2="14.6" y2="464.4"/><line x1="5.8" y1="465.8" x2="4.4" y2="464.4"/></g></g></svg>
<div class="t" style="right:1071px;top:12px;color:#f6f6f6;font-size:12px;font-weight:normal;text-align:right;">4.343</div><div class="t" style="left:1072px;top:12px;color:#f6f6f6;font-size:12px;font-weight:normal;">4.343</div><div class="t" style="right:1071px;top:67.5px;color:#f6f6f6;font-size:12px;font-weight:normal;text-align:right;">4.287</div><div class="t" style="left:1072px;top:67.5px;color:#f6f6f6;font-size:12px;font-weight:normal;">4.287</div><div class="t" style="right:1071px;top:123px;color:#f6f6f6;font-size:12px;font-weight:normal;text-align:right;">4.231</div><div class="t" style="left:1072px;top:123px;color:#f6f6f6;font-size:12px;font-weight:normal;">4.231</div><div class="t" style="right:1071px;top:178.5px;color:#f6f6f6;font-size:12px;font-weight:normal;text-align:right;">4.175</div><div class="t" style="left:1072px;top:178.5px;color:#f6f6f6;font-size:12px;font-weight:normal;">4.175</div><div class="t" style="right:1071px;top:234px;color:#f6f6f6;font-size:12px;font-weight:normal;text-align:right;">4.119</div><div class="t" style="left:1072px;top:234px;color:#f6f6f6;font-size:12px;font-weight:normal;">4.119</div><div class="t" style="right:1071px;top:289.5px;color:#f6f6f6;font-size:12px;font-weight:normal;text-align:right;">4.063</div><div class="t" style="left:1072px;top:289.5px;color:#f6f6f6;font-size:12px;font-weight:normal;">4.063</div><div class="t" style="right:1071px;top:345px;color:#f6f6f6;font-size:12px;font-weight:normal;text-align:right;">4.008</div><div class="t" style="left:1072px;top:345px;color:#f6f6f6;font-size:12px;font-weight:normal;">4.008</div><div class="t" style="right:1071px;top:400.5px;color:#f6f6f6;font-size:12px;font-weight:normal;text-align:right;">3.952</div><div class="t" style="left:1072px;top:400.5px;color:#f6f6f6;font-size:12px;font-weight:normal;">3.952</div><div class="t" style="right:1071px;top:478px;color:#f6f6f6;font-size:12px;font-weight:normal;text-align:right;">0.021</div><div class="t" style="left:1072px;top:478px;color:#f6f6f6;font-size:12px;font-weight:normal;">0.021</div><div class="t" style="right:1071px;top:504px;color:#f6f6f6;font-size:12px;font-weight:normal;text-align:right;">0.011</div><div class="t" style="left:1072px;top:504px;color:#f6f6f6;font-size:12px;font-weight:normal;">0.011</div><div class="t" style="right:1071px;top:531px;color:#f6f6f6;font-size:12px;font-weight:normal;text-align:right;">0.002</div><div class="t" style="left:1072px;top:531px;color:#f6f6f6;font-size:12px;font-weight:normal;">0.002</div><div class="t" style="right:1071px;top:557px;color:#f6f6f6;font-size:12px;font-weight:normal;text-align:right;">-0.008</div><div class="t" style="left:1072px;top:557px;color:#f6f6f6;font-size:12px;font-weight:normal;">-0.008</div><div class="t" style="right:1071px;top:584px;color:#f6f6f6;font-size:12px;font-weight:normal;text-align:right;">-0.018</div><div class="t" style="left:1072px;top:584px;color:#f6f6f6;font-size:12px;font-weight:normal;">-0.018</div><div class="t" style="right:1071px;top:610px;color:#f6f6f6;font-size:12px;font-weight:normal;text-align:right;">-0.027</div><div class="t" style="left:1072px;top:610px;color:#f6f6f6;font-size:12px;font-weight:normal;">-0.027</div><div class="t" style="left:73px;top:1px;color:#f6f6f6;font-size:12px;font-weight:normal;">美债10年收益率</div><div class="t" style="left:158.5px;top:1px;color:#f86e10;font-size:12px;font-weight:normal;">【240分】</div><div class="t" style="left:248.3px;top:1px;color:#f6f6f6;font-size:12px;font-weight:normal;letter-spacing:0.21px;">BOLL(20,2) MID:4.011</div><div class="t" style="left:381.4px;top:1px;color:#e3da0a;font-size:12px;font-weight:normal;letter-spacing:-0.36px;">UPPER:4.085</div><div class="t" style="left:461.7px;top:1px;color:#de2ee6;font-size:12px;font-weight:normal;letter-spacing:-0.18px;">LOWER:3.937</div><div class="t" style="left:73.4px;top:467px;color:#f6f6f6;font-size:12px;font-weight:normal;letter-spacing:0.09px;">MACD(26,12,9) DIFF:-0.024</div><div class="t" style="left:235.5px;top:467px;color:#e3da0a;font-size:12px;font-weight:normal;letter-spacing:0.04px;">DEA:-0.020</div><div class="t" style="left:306.3px;top:467px;color:#de2ee6;font-size:12px;font-weight:normal;letter-spacing:0.28px;">MACD:-0.009</div><div class="t" style="left:368px;top:50px;color:#ea4c5e;font-size:12px;font-weight:normal;">4.298</div><div class="t" style="left:146px;top:162px;color:#52c48c;font-size:12px;font-weight:normal;">4.200</div><div class="t" style="left:722px;top:343.5px;color:#52c48c;font-size:12px;font-weight:normal;">4.017</div><div class="t" style="left:1034.5px;top:435px;color:#52c48c;font-size:12px;font-weight:normal;">3.925</div><div class="t" style="left:76.0px;top:646px;color:#f6f6f6;font-size:12px;font-weight:bold;">01/23</div><div class="t" style="left:220.2px;top:646px;color:#f6f6f6;font-size:12px;font-weight:bold;">01/29</div><div class="t" style="left:364.4px;top:646px;color:#f6f6f6;font-size:12px;font-weight:bold;">02/04</div><div class="t" style="left:508.59999999999997px;top:646px;color:#f6f6f6;font-size:12px;font-weight:bold;">02/10</div><div class="t" style="left:652.8px;top:646px;color:#f6f6f6;font-size:12px;font-weight:bold;">02/14</div><div class="t" style="left:797.0px;top:646px;color:#f6f6f6;font-size:12px;font-weight:bold;">02/20</div><div class="t" style="left:941.1999999999999px;top:646px;color:#f6f6f6;font-size:12px;font-weight:bold;">02/26</div><div class="t" style="left:12px;top:648px;color:#ff6d0a;font-size:12px;font-weight:bold;">240分</div><svg style="position:absolute;left:0;top:0" width="70" height="660"><polygon points="50,658 58.5,658 54.25,650" fill="#ff6d0a"/></svg><div style="position:absolute;left:1069px;top:394px;width:69px;height:18px;border:1px solid #f0a030;background:#000;box-sizing:border-box"></div><svg style="position:absolute;left:1125px;top:383px" width="14" height="12"><rect x="4" y="3" width="8" height="8" fill="#000"/><polygon points="4.3,6.8 11.8,6.8 8,3" fill="#f2a542"/><polygon points="4.3,10.8 11.8,10.8 8,7.2" fill="#f2a542"/></svg><div class="t" style="left:1072px;top:398px;color:#f0a030;font-size:12px;font-weight:normal;">3.965</div><div style="position:absolute;left:1019px;top:605px;width:32px;height:32px;border-radius:3px;background:#ff8a12;overflow:hidden"><svg width="32" height="32" viewBox="0 0 32 32"><circle cx="16" cy="16.5" r="12.2" fill="#fff"/><circle cx="19.6" cy="13.2" r="8.2" fill="#ff8a12"/><path d="M3.5 14 Q5 8 12 5" stroke="#ff8a12" stroke-width="1.2" fill="none"/><path d="M5.5 13 Q8 7 15 5.5" stroke="#ff8a12" stroke-width="0.8" fill="none"/></svg></div><div class="t" style="left:1058px;top:606.5px;font-size:22px;color:#f3e4d6;font-weight:normal;-webkit-text-stroke:0.7px #f3e4d6;letter-spacing:0px">汇金网</div><div class="t" style="left:1058px;top:630.5px;font-size:7.8px;color:#cfc3b7;letter-spacing:0.1px">www.gold678.com</div>
</body></html>
